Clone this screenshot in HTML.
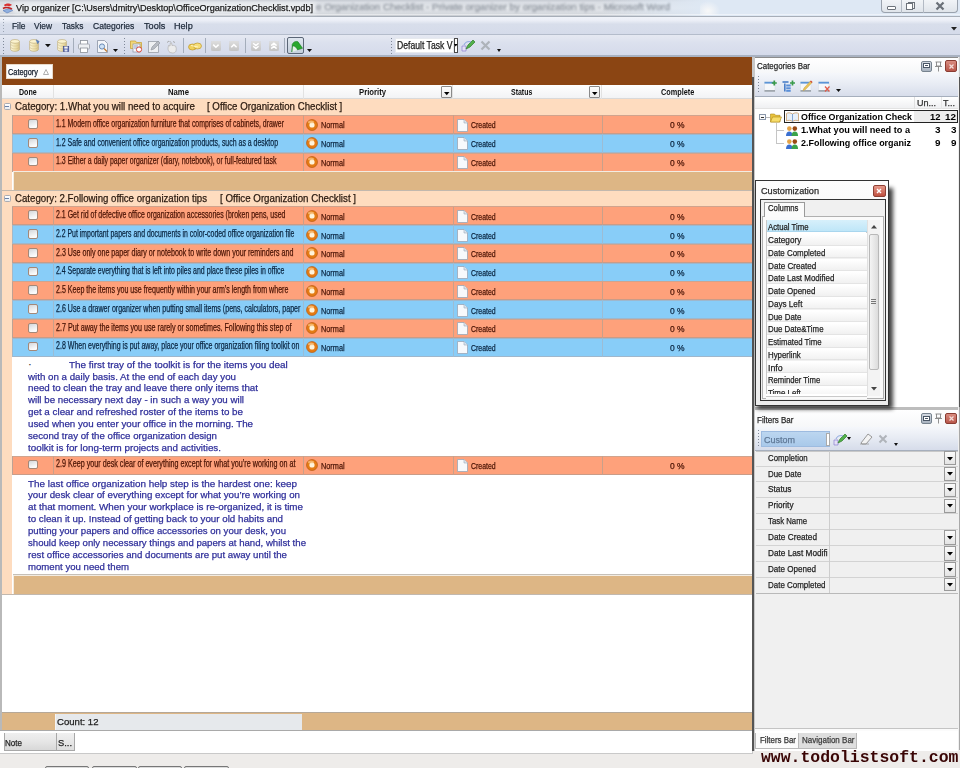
<!DOCTYPE html>
<html><head><meta charset="utf-8"><title>Vip organizer</title>
<style>
*{margin:0;padding:0;box-sizing:border-box}
html,body{width:960px;height:768px;overflow:hidden;background:#f0f0f0;font-family:"Liberation Sans",sans-serif;position:relative}
.a{position:absolute}
svg.a{overflow:visible}
.t{position:absolute;white-space:nowrap;transform-origin:0 0}
</style></head><body>
<div class="a" style="left:0px;top:0px;width:960px;height:16px;background:linear-gradient(#c6cbd2 0%,#d9dde3 15%,#e4e7eb 50%,#d5d9de 85%,#c9cdd3 100%)"></div>
<div class="a" style="left:600px;top:0px;width:360px;height:16px;background:linear-gradient(90deg,rgba(222,232,244,0) 0%,rgba(222,232,244,1) 30%,rgba(222,232,244,1) 100%)"></div>
<div class="a" style="left:700px;top:1px;width:260px;height:14px;background:radial-gradient(ellipse 12px 10px at 8px 10px,#f8f8f8,rgba(255,255,255,0))"></div>
<div class="a" style="left:0px;top:13.8px;width:960px;height:1px;background:rgba(255,255,255,.45)"></div>
<div class="a" style="left:0px;top:15.5px;width:960px;height:1px;background:#a7aeb8"></div>
<svg class="a" style="left:1.5px;top:2px" width="12" height="12" viewBox="0 0 12 12"><path d="M1 8.5l6-2 4 2-6 2.5z" fill="#8fb0e0" stroke="#4a6fb0" stroke-width=".5"/><path d="M2 3c2-2 6-2 8 0l-3 1.5C5.5 3.5 4 3.8 3 4.5z" fill="#d83030"/><path d="M1 6.5c2-1.5 6-1.5 9 .5" stroke="#c02020" stroke-width="1.6" fill="none"/></svg>
<div class="a" style="left:14px;top:2px;width:302px;height:12px;background:rgba(240,242,245,.7);filter:blur(2px)"></div>
<div class='t' style='left:16px;top:3.51px;line-height:9.2px;font-family:"Liberation Sans",sans-serif;font-size:9.2px;font-weight:normal;color:#1a1a1a;transform:scaleX(0.9920);-webkit-text-stroke:0.25px #1a1a1a;'>Vip organizer [C:\Users\dmitry\Desktop\OfficeOrganizationChecklist.vpdb]</div>
<div class='t' style='left:316px;top:3.18px;line-height:9px;font-family:"Liberation Sans",sans-serif;font-size:9px;font-weight:normal;color:#6f7782;transform:scaleX(1.0995);-webkit-text-stroke:0.25px #6f7782;filter:blur(1.2px);opacity:.75'>e Organization Checklist - Private organizer by organization tips - Microsoft Word</div>
<div class="a" style="left:880.5px;top:-1px;width:77px;height:14px;border:1px solid #9aa2ad;border-top:none;border-radius:0 0 4px 4px;background:linear-gradient(#f3f5f8,#dfe4ea)"></div>
<div class="a" style="left:901px;top:0px;width:1px;height:13px;background:#b3bac4"></div>
<div class="a" style="left:922.5px;top:0px;width:1px;height:13px;background:#b3bac4"></div>
<div class="a" style="left:887px;top:6px;width:9px;height:3.5px;border:1px solid #6d737b;border-radius:1px;background:#fff"></div>
<div class="a" style="left:908px;top:1.5px;width:7px;height:7px;border:1px solid #6d737b;background:#f4f4f4"></div>
<div class="a" style="left:906px;top:3px;width:7px;height:7px;border:1px solid #6d737b;background:#fff"></div>
<svg class="a" style="left:935px;top:1px" width="10" height="10" viewBox="0 0 10 10"><path d="M1.5 1.5L8.5 8.5M8.5 1.5L1.5 8.5" stroke="#6a7078" stroke-width="2.2"/></svg>
<div class="a" style="left:0px;top:16.5px;width:960px;height:18px;background:linear-gradient(#f1f4fa 0%,#eceff7 18%,#d8deeb 40%,#d5dbea 100%)"></div>
<div class="a" style="left:0px;top:34px;width:960px;height:1px;background:#b4bccb"></div>
<div class="a" style="left:3px;top:19px;width:1px;height:14px;background:repeating-linear-gradient(#9aa3b2 0 1px,transparent 1px 3px)"></div>
<div class='t' style='left:11.5px;top:21.37px;line-height:9.6px;font-family:"Liberation Sans",sans-serif;font-size:9.6px;font-weight:normal;color:#1e2a3a;transform:scaleX(0.8727);-webkit-text-stroke:0.25px #1e2a3a;'>File</div>
<div class='t' style='left:34px;top:21.37px;line-height:9.6px;font-family:"Liberation Sans",sans-serif;font-size:9.6px;font-weight:normal;color:#1e2a3a;transform:scaleX(0.8727);-webkit-text-stroke:0.25px #1e2a3a;'>View</div>
<div class='t' style='left:62px;top:21.37px;line-height:9.6px;font-family:"Liberation Sans",sans-serif;font-size:9.6px;font-weight:normal;color:#1e2a3a;transform:scaleX(0.8683);-webkit-text-stroke:0.25px #1e2a3a;'>Tasks</div>
<div class='t' style='left:92.7px;top:21.37px;line-height:9.6px;font-family:"Liberation Sans",sans-serif;font-size:9.6px;font-weight:normal;color:#1e2a3a;transform:scaleX(0.8900);-webkit-text-stroke:0.25px #1e2a3a;'>Categories</div>
<div class='t' style='left:143.7px;top:21.37px;line-height:9.6px;font-family:"Liberation Sans",sans-serif;font-size:9.6px;font-weight:normal;color:#1e2a3a;transform:scaleX(0.9506);-webkit-text-stroke:0.25px #1e2a3a;'>Tools</div>
<div class='t' style='left:174px;top:21.37px;line-height:9.6px;font-family:"Liberation Sans",sans-serif;font-size:9.6px;font-weight:normal;color:#1e2a3a;transform:scaleX(0.9476);-webkit-text-stroke:0.25px #1e2a3a;'>Help</div>
<svg class="a" style="left:951px;top:27px" width="6" height="4"><path d="M0 0H6L3 3.5Z" fill="#222"/></svg>
<div class="a" style="left:0px;top:35px;width:960px;height:21px;background:linear-gradient(#e6e9f2 0%,#dce1ee 35%,#d4daea 100%)"></div>
<div class="a" style="left:0px;top:55.3px;width:960px;height:1.5px;background:#a9b2c1"></div>
<div class="a" style="left:3px;top:38px;width:1.2px;height:16px;background:repeating-linear-gradient(#7f8898 0 .9px,transparent .9px 3px)"></div>
<div class="a" style="left:124px;top:38px;width:1.2px;height:16px;background:repeating-linear-gradient(#7f8898 0 .9px,transparent .9px 3px)"></div>
<div class="a" style="left:391px;top:38px;width:1.2px;height:16px;background:repeating-linear-gradient(#7f8898 0 .9px,transparent .9px 3px)"></div>
<div class="a" style="left:73px;top:38px;width:1.3px;height:15px;background:#a4adbb"></div>
<div class="a" style="left:183px;top:38px;width:1.3px;height:15px;background:#a4adbb"></div>
<div class="a" style="left:205px;top:38px;width:1.3px;height:15px;background:#a4adbb"></div>
<div class="a" style="left:244.6px;top:38px;width:1.3px;height:15px;background:#a4adbb"></div>
<div class="a" style="left:284px;top:38px;width:1.3px;height:15px;background:#a4adbb"></div>
<svg class="a" style="left:10.2px;top:38.9px" width="13" height="13" viewBox="0 0 13 13"><defs><linearGradient id="dbg" x1="0" x2="1"><stop offset="0" stop-color="#fbf6dc"/><stop offset=".55" stop-color="#efe2ae"/><stop offset="1" stop-color="#d8c488"/></linearGradient></defs><path d="M.6 2.4v8c0 1 2 1.9 4.4 1.9s4.4-.9 4.4-1.9v-8" fill="url(#dbg)" stroke="#b9a672" stroke-width=".6"/><ellipse cx="5" cy="2.4" rx="4.4" ry="1.9" fill="#fbf3cf" stroke="#b9a672" stroke-width=".6"/><path d="M.8 5.3c0 1 1.9 1.8 4.2 1.8s4.2-.8 4.2-1.8M.8 8.1c0 1 1.9 1.8 4.2 1.8s4.2-.8 4.2-1.8" fill="none" stroke="#cdbb85" stroke-width=".5"/></svg>
<svg class="a" style="left:29px;top:38.9px" width="13" height="13" viewBox="0 0 13 13"><defs><linearGradient id="dbg" x1="0" x2="1"><stop offset="0" stop-color="#fbf6dc"/><stop offset=".55" stop-color="#efe2ae"/><stop offset="1" stop-color="#d8c488"/></linearGradient></defs><path d="M.6 2.4v8c0 1 2 1.9 4.4 1.9s4.4-.9 4.4-1.9v-8" fill="url(#dbg)" stroke="#b9a672" stroke-width=".6"/><ellipse cx="5" cy="2.4" rx="4.4" ry="1.9" fill="#fbf3cf" stroke="#b9a672" stroke-width=".6"/><path d="M.8 5.3c0 1 1.9 1.8 4.2 1.8s4.2-.8 4.2-1.8M.8 8.1c0 1 1.9 1.8 4.2 1.8s4.2-.8 4.2-1.8" fill="none" stroke="#cdbb85" stroke-width=".5"/><path d="M7 .8l3.2 1.6-1.5 2.4z" fill="#5b84c8" stroke="#3a5f9e" stroke-width=".4"/></svg>
<svg class="a" style="left:57px;top:38.9px" width="13" height="13" viewBox="0 0 13 13"><defs><linearGradient id="dbg" x1="0" x2="1"><stop offset="0" stop-color="#fbf6dc"/><stop offset=".55" stop-color="#efe2ae"/><stop offset="1" stop-color="#d8c488"/></linearGradient></defs><path d="M.6 2.4v8c0 1 2 1.9 4.4 1.9s4.4-.9 4.4-1.9v-8" fill="url(#dbg)" stroke="#b9a672" stroke-width=".6"/><ellipse cx="5" cy="2.4" rx="4.4" ry="1.9" fill="#fbf3cf" stroke="#b9a672" stroke-width=".6"/><path d="M.8 5.3c0 1 1.9 1.8 4.2 1.8s4.2-.8 4.2-1.8M.8 8.1c0 1 1.9 1.8 4.2 1.8s4.2-.8 4.2-1.8" fill="none" stroke="#cdbb85" stroke-width=".5"/><rect x="6.2" y="7.3" width="5.6" height="5.4" fill="#5a68b0" stroke="#34407a" stroke-width=".5"/><rect x="7.3" y="7.6" width="3.4" height="2" fill="#f4f4f4"/><rect x="7.6" y="10.5" width="2.8" height="2" fill="#dfe3f0"/></svg>
<svg class="a" style="left:44.8px;top:44px" width="6" height="4"><path d="M0 0H5.8L2.9 3.3Z" fill="#111"/></svg>
<svg class="a" style="left:78px;top:39.5px" width="12" height="13" viewBox="0 0 12 13"><rect x="2.5" y="0.5" width="7" height="4" fill="#fff" stroke="#8a8f98" stroke-width=".8"/><rect x="0.5" y="4" width="11" height="5" rx="1" fill="#eef0f3" stroke="#9aa0a8" stroke-width=".8"/><rect x="2.5" y="8" width="7" height="4.5" fill="#fff" stroke="#8a8f98" stroke-width=".8"/></svg>
<svg class="a" style="left:96.5px;top:39.5px" width="11" height="13" viewBox="0 0 11 13"><path d="M.5 .5h7l3 3v9h-10z" fill="#f4f6fa" stroke="#8a93a3" stroke-width=".8"/><circle cx="5" cy="6.5" r="2.6" fill="#cfe2f5" stroke="#5c7fae" stroke-width=".9"/><path d="M7 8.5l3 3" stroke="#c07a30" stroke-width="1.3"/></svg>
<svg class="a" style="left:113px;top:49px" width="5" height="3"><path d="M0 0H5L2.5 3Z" fill="#111"/></svg>
<svg class="a" style="left:130px;top:39px" width="13" height="14" viewBox="0 0 13 14"><path d="M.5 2h5l1 1.5h5v6h-11z" fill="#f1d77a" stroke="#c59c2c" stroke-width=".7"/><rect x="3" y="5" width="7" height="8" fill="#f8f8fb" stroke="#8a93a3" stroke-width=".7"/><circle cx="9" cy="10.5" r="2.6" fill="#fff" stroke="#d9473c" stroke-width="1"/><path d="M4 7h4M4 9h3" stroke="#6f87b8" stroke-width=".8"/></svg>
<svg class="a" style="left:148px;top:39.5px" width="13" height="13" viewBox="0 0 13 13"><rect x=".5" y="1.5" width="10" height="11" fill="#eef0f3" stroke="#9aa0a8" stroke-width=".8"/><path d="M3 10l1-3 6-6 2 2-6 6z" fill="#b8bcc4" stroke="#8d939c" stroke-width=".6"/></svg>
<svg class="a" style="left:166px;top:39.5px" width="12" height="13" viewBox="0 0 12 13"><path d="M4 12.5c-1.5-1-2-2.5-2-4.5l.5-2.5 1.5.5.3-3 1.4.2.3 2.3 1.2-.2 1.3.4 1.2.5.6 2.3-.3 2.7c-.8 1.3-2 1.8-3.5 1.8z" fill="#ececec" stroke="#a8a8a8" stroke-width=".6"/><path d="M1 2.5l2-1.5M3.5 1l1.5 1.5M7 1.5l2 1" stroke="#9a9a9a" stroke-width=".8"/></svg>
<svg class="a" style="left:187.5px;top:40.5px" width="14" height="11" viewBox="0 0 14 11"><ellipse cx="4.5" cy="6" rx="4" ry="3" fill="#f1d25c" stroke="#b48c1c" stroke-width=".6"/><ellipse cx="9.5" cy="5" rx="4" ry="3" fill="#f6de7a" stroke="#b48c1c" stroke-width=".6"/><path d="M3 4.5l7 1.5" stroke="#fff4c0" stroke-width="1"/></svg>
<div class="a" style="left:211.2px;top:41px;width:9.8px;height:9.8px;border-radius:2px;background:linear-gradient(#dedede,#c3c3c3);box-shadow:0 0 0.6px #bbb"></div>
<svg class="a" style="left:211.2px;top:41px" width="10" height="10"><path d="M2.2 3.6l2.7 2.7 2.7-2.7" fill="none" stroke="#fff" stroke-width="1.5"/></svg>
<div class="a" style="left:229px;top:41px;width:9.8px;height:9.8px;border-radius:2px;background:linear-gradient(#dedede,#c3c3c3);box-shadow:0 0 0.6px #bbb"></div>
<svg class="a" style="left:229px;top:41px" width="10" height="10"><path d="M2.2 6.2l2.7-2.6 2.7 2.6" fill="none" stroke="#fff" stroke-width="1.5"/></svg>
<div class="a" style="left:251px;top:41px;width:9.8px;height:9.8px;border-radius:2px;background:linear-gradient(#dedede,#c3c3c3);box-shadow:0 0 0.6px #bbb"></div>
<svg class="a" style="left:251px;top:41px" width="10" height="10"><path d="M2.2 2.2l2.7 2.4 2.7-2.4M2.2 5.2l2.7 2.4 2.7-2.4" fill="none" stroke="#fff" stroke-width="1.5"/></svg>
<div class="a" style="left:269px;top:41px;width:9.8px;height:9.8px;border-radius:2px;background:linear-gradient(#dedede,#c3c3c3);box-shadow:0 0 0.6px #bbb"></div>
<svg class="a" style="left:269px;top:41px" width="10" height="10"><path d="M2.2 4.6l2.7-2.4 2.7 2.4M2.2 7.6l2.7-2.4 2.7 2.4" fill="none" stroke="#fff" stroke-width="1.5"/></svg>
<div class="a" style="left:286.7px;top:37.3px;width:17.5px;height:17px;border:1.2px solid #5b6677;border-radius:2px;background:linear-gradient(#dfe6ef,#c4cfdc)"></div>
<svg class="a" style="left:289px;top:39.5px" width="14" height="13" viewBox="0 0 14 13"><path d="M3 12L4 6C6 6 7.5 7.5 8.5 10z" fill="#e4f2e6"/><path d="M3.2 4.5C4.5 1.5 7 1 9 1.8L13.5 8.3L8.5 9.8C7 6.5 5 5.5 3.4 6.2z" fill="#2aa82e" stroke="#147a1c" stroke-width=".6"/><path d="M2.8 12L3.4 5.5" stroke="#2a8a30" stroke-width="1"/></svg>
<svg class="a" style="left:306.5px;top:49px" width="5" height="3"><path d="M0 0H5L2.5 3Z" fill="#111"/></svg>
<div class="a" style="left:394.6px;top:38px;width:59px;height:15.3px;background:#fff;border:1px solid #e6e9ee"></div>
<div class='t' style='left:397px;top:41.14px;line-height:10px;font-family:"Liberation Sans",sans-serif;font-size:10px;font-weight:normal;color:#1a1a1a;transform:scaleX(0.8632);-webkit-text-stroke:0.25px #1a1a1a;'>Default Task V</div>
<div class="a" style="left:453.5px;top:38px;width:4.5px;height:15.3px;background:#fff;border:1px solid #4b4b4b"></div>
<svg class="a" style="left:454.3px;top:44px" width="3.5" height="3"><path d="M0 0H3.5L1.75 2.5Z" fill="#000"/></svg>
<svg class="a" style="left:461px;top:39px" width="14" height="13" viewBox="0 0 14 13"><path d="M1 7h4v5H1z" fill="#e4e0f6" stroke="#8a7fd0" stroke-width=".7"/><path d="M5 10l2-4 5-5 2 2-5 5z" fill="#52b04a" stroke="#2f7d2a" stroke-width=".7"/><path d="M3 6c1-3 4-4 7-3" fill="none" stroke="#6d8fd8" stroke-width=".8"/></svg>
<svg class="a" style="left:480px;top:40px" width="11" height="11"><path d="M1.5 1.5L9.5 9.5M9.5 1.5L1.5 9.5" stroke="#aeb3ba" stroke-width="2.2"/></svg>
<svg class="a" style="left:497px;top:48.5px" width="4" height="3"><path d="M0 0H4L2 3Z" fill="#111"/></svg>
<div class="a" style="left:0px;top:57px;width:752.5px;height:654.5px;background:#fff"></div>
<div class="a" style="left:0px;top:57px;width:1.7px;height:654.5px;background:#b9b9b9"></div>
<div class="a" style="left:1.7px;top:57px;width:750.8px;height:27.6px;background:#8b4513"></div>
<div class="a" style="left:6px;top:64px;width:47px;height:15px;background:#fdfdfd;border:1px solid #e8d9c8"></div>
<div class='t' style='left:7.5px;top:67.95px;line-height:8.8px;font-family:"Liberation Sans",sans-serif;font-size:8.8px;font-weight:normal;color:#111a2a;transform:scaleX(0.8403);-webkit-text-stroke:0.25px #111a2a;'>Category</div>
<svg class="a" style="left:43px;top:68.5px" width="6" height="6"><path d="M3 .5L5.5 5.5H.5Z" fill="none" stroke="#9a9a9a" stroke-width=".8"/></svg>
<div class="a" style="left:1.7px;top:84.6px;width:750.8px;height:14.2px;background:linear-gradient(#fefefe,#f2f3f5);border-bottom:1px solid #d9d9d9"></div>
<div class="a" style="left:53.3px;top:84.8px;width:1px;height:14px;background:#e2e2e2"></div>
<div class="a" style="left:303px;top:84.8px;width:1px;height:14px;background:#e2e2e2"></div>
<div class="a" style="left:452px;top:84.8px;width:1px;height:14px;background:#e2e2e2"></div>
<div class="a" style="left:601px;top:84.8px;width:1px;height:14px;background:#e2e2e2"></div>
<div class='t' style='left:19px;top:88.49px;line-height:8.4px;font-family:"Liberation Sans",sans-serif;font-size:8.4px;font-weight:bold;color:#111;transform:scaleX(0.8454);'>Done</div>
<div class='t' style='left:168px;top:88.49px;line-height:8.4px;font-family:"Liberation Sans",sans-serif;font-size:8.4px;font-weight:bold;color:#111;transform:scaleX(0.9205);'>Name</div>
<div class='t' style='left:359px;top:88.49px;line-height:8.4px;font-family:"Liberation Sans",sans-serif;font-size:8.4px;font-weight:bold;color:#111;transform:scaleX(0.9206);'>Priority</div>
<div class='t' style='left:510.7px;top:88.49px;line-height:8.4px;font-family:"Liberation Sans",sans-serif;font-size:8.4px;font-weight:bold;color:#111;transform:scaleX(0.8317);'>Status</div>
<div class='t' style='left:660.7px;top:88.49px;line-height:8.4px;font-family:"Liberation Sans",sans-serif;font-size:8.4px;font-weight:bold;color:#111;transform:scaleX(0.8724);'>Complete</div>
<div class="a" style="left:440.8px;top:86.2px;width:11.1px;height:11.9px;background:linear-gradient(#fdfdfd,#ececec);border:1px solid #8a8a8a;border-bottom:1.5px solid #8a8a8a;border-radius:1px"></div>
<svg class="a" style="left:443.7px;top:92px" width="5.5" height="3.4"><path d="M0 0H5.5L2.75 3.3Z" fill="#000"/></svg>
<div class="a" style="left:589.2px;top:86.2px;width:11.1px;height:11.9px;background:linear-gradient(#fdfdfd,#ececec);border:1px solid #8a8a8a;border-bottom:1.5px solid #8a8a8a;border-radius:1px"></div>
<svg class="a" style="left:592.1px;top:92px" width="5.5" height="3.4"><path d="M0 0H5.5L2.75 3.3Z" fill="#000"/></svg>
<div class="a" style="left:1.7px;top:98.8px;width:750.8px;height:16.5px;background:#fedcbf"></div>
<div class="a" style="left:3.7px;top:102.85px;width:7.1px;height:7px;border:1px solid #a8acb4;background:linear-gradient(#fff,#e9ecf0);border-radius:1.5px"></div>
<div class="a" style="left:5.3px;top:105.95px;width:3.9px;height:1px;background:#6a82a8"></div>
<div class='t' style='left:15px;top:102.08px;line-height:10.3px;font-family:"Liberation Sans",sans-serif;font-size:10.3px;font-weight:normal;color:#2a1a10;transform:scaleX(0.9444);-webkit-text-stroke:0.25px #2a1a10;'>Category: 1.What you will need to acquire</div>
<div class='t' style='left:207.3px;top:102.08px;line-height:10.3px;font-family:"Liberation Sans",sans-serif;font-size:10.3px;font-weight:normal;color:#2a1a10;transform:scaleX(0.9394);-webkit-text-stroke:0.25px #2a1a10;'>[ Office Organization Checklist ]</div>
<div class="a" style="left:1.7px;top:115.3px;width:11.5px;height:18.75px;background:#fedcbf"></div>
<div class="a" style="left:12px;top:115.0px;width:740.5px;height:19.35px;background:#fea17b"></div>
<div class="a" style="left:12px;top:133.15px;width:740.5px;height:1.1px;background:#c99c88"></div>
<div class="a" style="left:12px;top:115.0px;width:740.5px;height:0.9px;background:#d0a48e"></div>
<div class="a" style="left:12px;top:115.3px;width:1px;height:18.75px;background:#bda294"></div>
<div class="a" style="left:53.3px;top:115.3px;width:0.9px;height:18.75px;background:#c9a08a"></div>
<div class="a" style="left:303px;top:115.3px;width:0.9px;height:18.75px;background:#c9a08a"></div>
<div class="a" style="left:453.3px;top:115.3px;width:0.9px;height:18.75px;background:#c9a08a"></div>
<div class="a" style="left:601.5px;top:115.3px;width:0.9px;height:18.75px;background:#c9a08a"></div>
<div class="a" style="left:27.6px;top:119.1px;width:10px;height:9.8px;border:1px solid #a48878;border-radius:2px;background:linear-gradient(160deg,#d2d6da 0%,#e8eaec 40%,#fbfbfb 80%)"></div>
<div class='t' style='left:55.6px;top:118.93px;line-height:10px;font-family:"Liberation Sans",sans-serif;font-size:10px;font-weight:normal;color:#4a1405;transform:scaleX(0.6932);-webkit-text-stroke:0.25px #4a1405;'>1.1 Modern office organization furniture that comprises of cabinets, drawer</div>
<svg class="a" style="left:305.6px;top:118.6px" width="12" height="12" viewBox="0 0 12 12"><circle cx="6" cy="6" r="5.5" fill="#e47b14"/><circle cx="6" cy="6" r="5.5" fill="none" stroke="#b3530a" stroke-width=".6"/><circle cx="6" cy="6" r="2.6" fill="#fff4dc"/><ellipse cx="5" cy="3" rx="3" ry="1.6" fill="#ffd9a0" opacity=".6"/></svg>
<div class='t' style='left:321px;top:120.46px;line-height:9.5px;font-family:"Liberation Sans",sans-serif;font-size:9.5px;font-weight:normal;color:#4a1405;transform:scaleX(0.7706);-webkit-text-stroke:0.25px #4a1405;'>Normal</div>
<svg class="a" style="left:457.2px;top:118.6px" width="11" height="13" viewBox="0 0 11 13"><path d="M.5 .5h6.5l3.5 3.5v8.5h-10z" fill="#f7f9fc" stroke="#9aa7b8" stroke-width=".8"/><path d="M7 .5v3.5h3.5" fill="#dde5ee" stroke="#9aa7b8" stroke-width=".6"/></svg>
<div class='t' style='left:471.3px;top:120.46px;line-height:9.5px;font-family:"Liberation Sans",sans-serif;font-size:9.5px;font-weight:normal;color:#4a1405;transform:scaleX(0.7275);-webkit-text-stroke:0.25px #4a1405;'>Created</div>
<div class='t' style='left:670px;top:120.46px;line-height:9.5px;font-family:"Liberation Sans",sans-serif;font-size:9.5px;font-weight:normal;color:#4a1405;transform:scaleX(0.8916);-webkit-text-stroke:0.25px #4a1405;'>0 %</div>
<div class="a" style="left:1.7px;top:134.05px;width:11.5px;height:18.75px;background:#fedcbf"></div>
<div class="a" style="left:12px;top:133.75px;width:740.5px;height:19.35px;background:#88cdf8"></div>
<div class="a" style="left:12px;top:151.9px;width:740.5px;height:1.1px;background:#9fb7cc"></div>
<div class="a" style="left:12px;top:133.75px;width:740.5px;height:0.9px;background:#9fb7cc"></div>
<div class="a" style="left:12px;top:134.05px;width:1px;height:18.75px;background:#a4b8c8"></div>
<div class="a" style="left:53.3px;top:134.05px;width:0.9px;height:18.75px;background:#9cbcd4"></div>
<div class="a" style="left:303px;top:134.05px;width:0.9px;height:18.75px;background:#9cbcd4"></div>
<div class="a" style="left:453.3px;top:134.05px;width:0.9px;height:18.75px;background:#9cbcd4"></div>
<div class="a" style="left:601.5px;top:134.05px;width:0.9px;height:18.75px;background:#9cbcd4"></div>
<div class="a" style="left:27.6px;top:137.85000000000002px;width:10px;height:9.8px;border:1px solid #a48878;border-radius:2px;background:linear-gradient(160deg,#d2d6da 0%,#e8eaec 40%,#fbfbfb 80%)"></div>
<div class='t' style='left:55.6px;top:137.69px;line-height:10px;font-family:"Liberation Sans",sans-serif;font-size:10px;font-weight:normal;color:#0a2540;transform:scaleX(0.6961);-webkit-text-stroke:0.25px #0a2540;'>1.2 Safe and convenient office organization products, such as a desktop</div>
<svg class="a" style="left:305.6px;top:137.35000000000002px" width="12" height="12" viewBox="0 0 12 12"><circle cx="6" cy="6" r="5.5" fill="#e47b14"/><circle cx="6" cy="6" r="5.5" fill="none" stroke="#b3530a" stroke-width=".6"/><circle cx="6" cy="6" r="2.6" fill="#fff4dc"/><ellipse cx="5" cy="3" rx="3" ry="1.6" fill="#ffd9a0" opacity=".6"/></svg>
<div class='t' style='left:321px;top:139.21px;line-height:9.5px;font-family:"Liberation Sans",sans-serif;font-size:9.5px;font-weight:normal;color:#0a2540;transform:scaleX(0.7706);-webkit-text-stroke:0.25px #0a2540;'>Normal</div>
<svg class="a" style="left:457.2px;top:137.35000000000002px" width="11" height="13" viewBox="0 0 11 13"><path d="M.5 .5h6.5l3.5 3.5v8.5h-10z" fill="#f7f9fc" stroke="#9aa7b8" stroke-width=".8"/><path d="M7 .5v3.5h3.5" fill="#dde5ee" stroke="#9aa7b8" stroke-width=".6"/></svg>
<div class='t' style='left:471.3px;top:139.21px;line-height:9.5px;font-family:"Liberation Sans",sans-serif;font-size:9.5px;font-weight:normal;color:#0a2540;transform:scaleX(0.7275);-webkit-text-stroke:0.25px #0a2540;'>Created</div>
<div class='t' style='left:670px;top:139.21px;line-height:9.5px;font-family:"Liberation Sans",sans-serif;font-size:9.5px;font-weight:normal;color:#0a2540;transform:scaleX(0.8916);-webkit-text-stroke:0.25px #0a2540;'>0 %</div>
<div class="a" style="left:1.7px;top:152.8px;width:11.5px;height:18.75px;background:#fedcbf"></div>
<div class="a" style="left:12px;top:152.5px;width:740.5px;height:19.35px;background:#fea17b"></div>
<div class="a" style="left:12px;top:170.65px;width:740.5px;height:1.1px;background:#c99c88"></div>
<div class="a" style="left:12px;top:152.5px;width:740.5px;height:0.9px;background:#d0a48e"></div>
<div class="a" style="left:12px;top:152.8px;width:1px;height:18.75px;background:#bda294"></div>
<div class="a" style="left:53.3px;top:152.8px;width:0.9px;height:18.75px;background:#c9a08a"></div>
<div class="a" style="left:303px;top:152.8px;width:0.9px;height:18.75px;background:#c9a08a"></div>
<div class="a" style="left:453.3px;top:152.8px;width:0.9px;height:18.75px;background:#c9a08a"></div>
<div class="a" style="left:601.5px;top:152.8px;width:0.9px;height:18.75px;background:#c9a08a"></div>
<div class="a" style="left:27.6px;top:156.60000000000002px;width:10px;height:9.8px;border:1px solid #a48878;border-radius:2px;background:linear-gradient(160deg,#d2d6da 0%,#e8eaec 40%,#fbfbfb 80%)"></div>
<div class='t' style='left:55.6px;top:156.44px;line-height:10px;font-family:"Liberation Sans",sans-serif;font-size:10px;font-weight:normal;color:#4a1405;transform:scaleX(0.6985);-webkit-text-stroke:0.25px #4a1405;'>1.3 Either a daily paper organizer (diary, notebook), or full-featured task</div>
<svg class="a" style="left:305.6px;top:156.10000000000002px" width="12" height="12" viewBox="0 0 12 12"><circle cx="6" cy="6" r="5.5" fill="#e47b14"/><circle cx="6" cy="6" r="5.5" fill="none" stroke="#b3530a" stroke-width=".6"/><circle cx="6" cy="6" r="2.6" fill="#fff4dc"/><ellipse cx="5" cy="3" rx="3" ry="1.6" fill="#ffd9a0" opacity=".6"/></svg>
<div class='t' style='left:321px;top:157.96px;line-height:9.5px;font-family:"Liberation Sans",sans-serif;font-size:9.5px;font-weight:normal;color:#4a1405;transform:scaleX(0.7706);-webkit-text-stroke:0.25px #4a1405;'>Normal</div>
<svg class="a" style="left:457.2px;top:156.10000000000002px" width="11" height="13" viewBox="0 0 11 13"><path d="M.5 .5h6.5l3.5 3.5v8.5h-10z" fill="#f7f9fc" stroke="#9aa7b8" stroke-width=".8"/><path d="M7 .5v3.5h3.5" fill="#dde5ee" stroke="#9aa7b8" stroke-width=".6"/></svg>
<div class='t' style='left:471.3px;top:157.96px;line-height:9.5px;font-family:"Liberation Sans",sans-serif;font-size:9.5px;font-weight:normal;color:#4a1405;transform:scaleX(0.7275);-webkit-text-stroke:0.25px #4a1405;'>Created</div>
<div class='t' style='left:670px;top:157.96px;line-height:9.5px;font-family:"Liberation Sans",sans-serif;font-size:9.5px;font-weight:normal;color:#4a1405;transform:scaleX(0.8916);-webkit-text-stroke:0.25px #4a1405;'>0 %</div>
<div class="a" style="left:1.7px;top:171.3px;width:10.8px;height:19.299999999999983px;background:#fedcbf"></div>
<div class="a" style="left:12.5px;top:171.3px;width:740.0px;height:19.299999999999983px;background:#ddb685"></div>
<div class="a" style="left:12.5px;top:171.3px;width:740.0px;height:1.2px;background:#f3ece2"></div>
<div class="a" style="left:12.5px;top:171.3px;width:1.5px;height:19.299999999999983px;background:#f3ece2"></div>
<div class="a" style="left:1.7px;top:190.1px;width:750.8px;height:1px;background:#c2b8ae"></div>
<div class="a" style="left:1.7px;top:190.9px;width:750.8px;height:15.699999999999989px;background:#fedcbf"></div>
<div class="a" style="left:3.7px;top:194.55px;width:7.1px;height:7px;border:1px solid #a8acb4;background:linear-gradient(#fff,#e9ecf0);border-radius:1.5px"></div>
<div class="a" style="left:5.3px;top:197.65px;width:3.9px;height:1px;background:#6a82a8"></div>
<div class='t' style='left:15px;top:194.18px;line-height:10.3px;font-family:"Liberation Sans",sans-serif;font-size:10.3px;font-weight:normal;color:#2a1a10;transform:scaleX(0.9379);-webkit-text-stroke:0.25px #2a1a10;'>Category: 2.Following office organization tips</div>
<div class='t' style='left:220px;top:194.18px;line-height:10.3px;font-family:"Liberation Sans",sans-serif;font-size:10.3px;font-weight:normal;color:#2a1a10;transform:scaleX(0.9442);-webkit-text-stroke:0.25px #2a1a10;'>[ Office Organization Checklist ]</div>
<div class="a" style="left:1.7px;top:206.6px;width:11.5px;height:18.75px;background:#fedcbf"></div>
<div class="a" style="left:12px;top:206.29999999999998px;width:740.5px;height:19.35px;background:#fea17b"></div>
<div class="a" style="left:12px;top:224.45px;width:740.5px;height:1.1px;background:#c99c88"></div>
<div class="a" style="left:12px;top:206.29999999999998px;width:740.5px;height:0.9px;background:#d0a48e"></div>
<div class="a" style="left:12px;top:206.6px;width:1px;height:18.75px;background:#bda294"></div>
<div class="a" style="left:53.3px;top:206.6px;width:0.9px;height:18.75px;background:#c9a08a"></div>
<div class="a" style="left:303px;top:206.6px;width:0.9px;height:18.75px;background:#c9a08a"></div>
<div class="a" style="left:453.3px;top:206.6px;width:0.9px;height:18.75px;background:#c9a08a"></div>
<div class="a" style="left:601.5px;top:206.6px;width:0.9px;height:18.75px;background:#c9a08a"></div>
<div class="a" style="left:27.6px;top:210.4px;width:10px;height:9.8px;border:1px solid #a48878;border-radius:2px;background:linear-gradient(160deg,#d2d6da 0%,#e8eaec 40%,#fbfbfb 80%)"></div>
<div class='t' style='left:55.6px;top:210.23px;line-height:10px;font-family:"Liberation Sans",sans-serif;font-size:10px;font-weight:normal;color:#4a1405;transform:scaleX(0.6987);-webkit-text-stroke:0.25px #4a1405;'>2.1 Get rid of defective office organization accessories (broken pens, used</div>
<svg class="a" style="left:305.6px;top:209.9px" width="12" height="12" viewBox="0 0 12 12"><circle cx="6" cy="6" r="5.5" fill="#e47b14"/><circle cx="6" cy="6" r="5.5" fill="none" stroke="#b3530a" stroke-width=".6"/><circle cx="6" cy="6" r="2.6" fill="#fff4dc"/><ellipse cx="5" cy="3" rx="3" ry="1.6" fill="#ffd9a0" opacity=".6"/></svg>
<div class='t' style='left:321px;top:211.76px;line-height:9.5px;font-family:"Liberation Sans",sans-serif;font-size:9.5px;font-weight:normal;color:#4a1405;transform:scaleX(0.7706);-webkit-text-stroke:0.25px #4a1405;'>Normal</div>
<svg class="a" style="left:457.2px;top:209.9px" width="11" height="13" viewBox="0 0 11 13"><path d="M.5 .5h6.5l3.5 3.5v8.5h-10z" fill="#f7f9fc" stroke="#9aa7b8" stroke-width=".8"/><path d="M7 .5v3.5h3.5" fill="#dde5ee" stroke="#9aa7b8" stroke-width=".6"/></svg>
<div class='t' style='left:471.3px;top:211.76px;line-height:9.5px;font-family:"Liberation Sans",sans-serif;font-size:9.5px;font-weight:normal;color:#4a1405;transform:scaleX(0.7275);-webkit-text-stroke:0.25px #4a1405;'>Created</div>
<div class='t' style='left:670px;top:211.76px;line-height:9.5px;font-family:"Liberation Sans",sans-serif;font-size:9.5px;font-weight:normal;color:#4a1405;transform:scaleX(0.8916);-webkit-text-stroke:0.25px #4a1405;'>0 %</div>
<div class="a" style="left:1.7px;top:225.35px;width:11.5px;height:18.75px;background:#fedcbf"></div>
<div class="a" style="left:12px;top:225.04999999999998px;width:740.5px;height:19.35px;background:#88cdf8"></div>
<div class="a" style="left:12px;top:243.2px;width:740.5px;height:1.1px;background:#9fb7cc"></div>
<div class="a" style="left:12px;top:225.04999999999998px;width:740.5px;height:0.9px;background:#9fb7cc"></div>
<div class="a" style="left:12px;top:225.35px;width:1px;height:18.75px;background:#a4b8c8"></div>
<div class="a" style="left:53.3px;top:225.35px;width:0.9px;height:18.75px;background:#9cbcd4"></div>
<div class="a" style="left:303px;top:225.35px;width:0.9px;height:18.75px;background:#9cbcd4"></div>
<div class="a" style="left:453.3px;top:225.35px;width:0.9px;height:18.75px;background:#9cbcd4"></div>
<div class="a" style="left:601.5px;top:225.35px;width:0.9px;height:18.75px;background:#9cbcd4"></div>
<div class="a" style="left:27.6px;top:229.15px;width:10px;height:9.8px;border:1px solid #a48878;border-radius:2px;background:linear-gradient(160deg,#d2d6da 0%,#e8eaec 40%,#fbfbfb 80%)"></div>
<div class='t' style='left:55.6px;top:228.98px;line-height:10px;font-family:"Liberation Sans",sans-serif;font-size:10px;font-weight:normal;color:#0a2540;transform:scaleX(0.6899);-webkit-text-stroke:0.25px #0a2540;'>2.2 Put important papers and documents in color-coded office organization file</div>
<svg class="a" style="left:305.6px;top:228.65px" width="12" height="12" viewBox="0 0 12 12"><circle cx="6" cy="6" r="5.5" fill="#e47b14"/><circle cx="6" cy="6" r="5.5" fill="none" stroke="#b3530a" stroke-width=".6"/><circle cx="6" cy="6" r="2.6" fill="#fff4dc"/><ellipse cx="5" cy="3" rx="3" ry="1.6" fill="#ffd9a0" opacity=".6"/></svg>
<div class='t' style='left:321px;top:230.51px;line-height:9.5px;font-family:"Liberation Sans",sans-serif;font-size:9.5px;font-weight:normal;color:#0a2540;transform:scaleX(0.7706);-webkit-text-stroke:0.25px #0a2540;'>Normal</div>
<svg class="a" style="left:457.2px;top:228.65px" width="11" height="13" viewBox="0 0 11 13"><path d="M.5 .5h6.5l3.5 3.5v8.5h-10z" fill="#f7f9fc" stroke="#9aa7b8" stroke-width=".8"/><path d="M7 .5v3.5h3.5" fill="#dde5ee" stroke="#9aa7b8" stroke-width=".6"/></svg>
<div class='t' style='left:471.3px;top:230.51px;line-height:9.5px;font-family:"Liberation Sans",sans-serif;font-size:9.5px;font-weight:normal;color:#0a2540;transform:scaleX(0.7275);-webkit-text-stroke:0.25px #0a2540;'>Created</div>
<div class='t' style='left:670px;top:230.51px;line-height:9.5px;font-family:"Liberation Sans",sans-serif;font-size:9.5px;font-weight:normal;color:#0a2540;transform:scaleX(0.8916);-webkit-text-stroke:0.25px #0a2540;'>0 %</div>
<div class="a" style="left:1.7px;top:244.1px;width:11.5px;height:18.75px;background:#fedcbf"></div>
<div class="a" style="left:12px;top:243.79999999999998px;width:740.5px;height:19.35px;background:#fea17b"></div>
<div class="a" style="left:12px;top:261.95px;width:740.5px;height:1.1px;background:#c99c88"></div>
<div class="a" style="left:12px;top:243.79999999999998px;width:740.5px;height:0.9px;background:#d0a48e"></div>
<div class="a" style="left:12px;top:244.1px;width:1px;height:18.75px;background:#bda294"></div>
<div class="a" style="left:53.3px;top:244.1px;width:0.9px;height:18.75px;background:#c9a08a"></div>
<div class="a" style="left:303px;top:244.1px;width:0.9px;height:18.75px;background:#c9a08a"></div>
<div class="a" style="left:453.3px;top:244.1px;width:0.9px;height:18.75px;background:#c9a08a"></div>
<div class="a" style="left:601.5px;top:244.1px;width:0.9px;height:18.75px;background:#c9a08a"></div>
<div class="a" style="left:27.6px;top:247.9px;width:10px;height:9.8px;border:1px solid #a48878;border-radius:2px;background:linear-gradient(160deg,#d2d6da 0%,#e8eaec 40%,#fbfbfb 80%)"></div>
<div class='t' style='left:55.6px;top:247.73px;line-height:10px;font-family:"Liberation Sans",sans-serif;font-size:10px;font-weight:normal;color:#4a1405;transform:scaleX(0.7106);-webkit-text-stroke:0.25px #4a1405;'>2.3 Use only one paper diary or notebook to write down your reminders and</div>
<svg class="a" style="left:305.6px;top:247.4px" width="12" height="12" viewBox="0 0 12 12"><circle cx="6" cy="6" r="5.5" fill="#e47b14"/><circle cx="6" cy="6" r="5.5" fill="none" stroke="#b3530a" stroke-width=".6"/><circle cx="6" cy="6" r="2.6" fill="#fff4dc"/><ellipse cx="5" cy="3" rx="3" ry="1.6" fill="#ffd9a0" opacity=".6"/></svg>
<div class='t' style='left:321px;top:249.26px;line-height:9.5px;font-family:"Liberation Sans",sans-serif;font-size:9.5px;font-weight:normal;color:#4a1405;transform:scaleX(0.7706);-webkit-text-stroke:0.25px #4a1405;'>Normal</div>
<svg class="a" style="left:457.2px;top:247.4px" width="11" height="13" viewBox="0 0 11 13"><path d="M.5 .5h6.5l3.5 3.5v8.5h-10z" fill="#f7f9fc" stroke="#9aa7b8" stroke-width=".8"/><path d="M7 .5v3.5h3.5" fill="#dde5ee" stroke="#9aa7b8" stroke-width=".6"/></svg>
<div class='t' style='left:471.3px;top:249.26px;line-height:9.5px;font-family:"Liberation Sans",sans-serif;font-size:9.5px;font-weight:normal;color:#4a1405;transform:scaleX(0.7275);-webkit-text-stroke:0.25px #4a1405;'>Created</div>
<div class='t' style='left:670px;top:249.26px;line-height:9.5px;font-family:"Liberation Sans",sans-serif;font-size:9.5px;font-weight:normal;color:#4a1405;transform:scaleX(0.8916);-webkit-text-stroke:0.25px #4a1405;'>0 %</div>
<div class="a" style="left:1.7px;top:262.85px;width:11.5px;height:18.75px;background:#fedcbf"></div>
<div class="a" style="left:12px;top:262.55px;width:740.5px;height:19.35px;background:#88cdf8"></div>
<div class="a" style="left:12px;top:280.70000000000005px;width:740.5px;height:1.1px;background:#9fb7cc"></div>
<div class="a" style="left:12px;top:262.55px;width:740.5px;height:0.9px;background:#9fb7cc"></div>
<div class="a" style="left:12px;top:262.85px;width:1px;height:18.75px;background:#a4b8c8"></div>
<div class="a" style="left:53.3px;top:262.85px;width:0.9px;height:18.75px;background:#9cbcd4"></div>
<div class="a" style="left:303px;top:262.85px;width:0.9px;height:18.75px;background:#9cbcd4"></div>
<div class="a" style="left:453.3px;top:262.85px;width:0.9px;height:18.75px;background:#9cbcd4"></div>
<div class="a" style="left:601.5px;top:262.85px;width:0.9px;height:18.75px;background:#9cbcd4"></div>
<div class="a" style="left:27.6px;top:266.65000000000003px;width:10px;height:9.8px;border:1px solid #a48878;border-radius:2px;background:linear-gradient(160deg,#d2d6da 0%,#e8eaec 40%,#fbfbfb 80%)"></div>
<div class='t' style='left:55.6px;top:266.49px;line-height:10px;font-family:"Liberation Sans",sans-serif;font-size:10px;font-weight:normal;color:#0a2540;transform:scaleX(0.6967);-webkit-text-stroke:0.25px #0a2540;'>2.4 Separate everything that is left into piles and place these piles in office</div>
<svg class="a" style="left:305.6px;top:266.15000000000003px" width="12" height="12" viewBox="0 0 12 12"><circle cx="6" cy="6" r="5.5" fill="#e47b14"/><circle cx="6" cy="6" r="5.5" fill="none" stroke="#b3530a" stroke-width=".6"/><circle cx="6" cy="6" r="2.6" fill="#fff4dc"/><ellipse cx="5" cy="3" rx="3" ry="1.6" fill="#ffd9a0" opacity=".6"/></svg>
<div class='t' style='left:321px;top:268.01px;line-height:9.5px;font-family:"Liberation Sans",sans-serif;font-size:9.5px;font-weight:normal;color:#0a2540;transform:scaleX(0.7706);-webkit-text-stroke:0.25px #0a2540;'>Normal</div>
<svg class="a" style="left:457.2px;top:266.15000000000003px" width="11" height="13" viewBox="0 0 11 13"><path d="M.5 .5h6.5l3.5 3.5v8.5h-10z" fill="#f7f9fc" stroke="#9aa7b8" stroke-width=".8"/><path d="M7 .5v3.5h3.5" fill="#dde5ee" stroke="#9aa7b8" stroke-width=".6"/></svg>
<div class='t' style='left:471.3px;top:268.01px;line-height:9.5px;font-family:"Liberation Sans",sans-serif;font-size:9.5px;font-weight:normal;color:#0a2540;transform:scaleX(0.7275);-webkit-text-stroke:0.25px #0a2540;'>Created</div>
<div class='t' style='left:670px;top:268.01px;line-height:9.5px;font-family:"Liberation Sans",sans-serif;font-size:9.5px;font-weight:normal;color:#0a2540;transform:scaleX(0.8916);-webkit-text-stroke:0.25px #0a2540;'>0 %</div>
<div class="a" style="left:1.7px;top:281.6px;width:11.5px;height:18.75px;background:#fedcbf"></div>
<div class="a" style="left:12px;top:281.3px;width:740.5px;height:19.35px;background:#fea17b"></div>
<div class="a" style="left:12px;top:299.45000000000005px;width:740.5px;height:1.1px;background:#c99c88"></div>
<div class="a" style="left:12px;top:281.3px;width:740.5px;height:0.9px;background:#d0a48e"></div>
<div class="a" style="left:12px;top:281.6px;width:1px;height:18.75px;background:#bda294"></div>
<div class="a" style="left:53.3px;top:281.6px;width:0.9px;height:18.75px;background:#c9a08a"></div>
<div class="a" style="left:303px;top:281.6px;width:0.9px;height:18.75px;background:#c9a08a"></div>
<div class="a" style="left:453.3px;top:281.6px;width:0.9px;height:18.75px;background:#c9a08a"></div>
<div class="a" style="left:601.5px;top:281.6px;width:0.9px;height:18.75px;background:#c9a08a"></div>
<div class="a" style="left:27.6px;top:285.40000000000003px;width:10px;height:9.8px;border:1px solid #a48878;border-radius:2px;background:linear-gradient(160deg,#d2d6da 0%,#e8eaec 40%,#fbfbfb 80%)"></div>
<div class='t' style='left:55.6px;top:285.24px;line-height:10px;font-family:"Liberation Sans",sans-serif;font-size:10px;font-weight:normal;color:#4a1405;transform:scaleX(0.7078);-webkit-text-stroke:0.25px #4a1405;'>2.5 Keep the items you use frequently within your arm’s length from where</div>
<svg class="a" style="left:305.6px;top:284.90000000000003px" width="12" height="12" viewBox="0 0 12 12"><circle cx="6" cy="6" r="5.5" fill="#e47b14"/><circle cx="6" cy="6" r="5.5" fill="none" stroke="#b3530a" stroke-width=".6"/><circle cx="6" cy="6" r="2.6" fill="#fff4dc"/><ellipse cx="5" cy="3" rx="3" ry="1.6" fill="#ffd9a0" opacity=".6"/></svg>
<div class='t' style='left:321px;top:286.76px;line-height:9.5px;font-family:"Liberation Sans",sans-serif;font-size:9.5px;font-weight:normal;color:#4a1405;transform:scaleX(0.7706);-webkit-text-stroke:0.25px #4a1405;'>Normal</div>
<svg class="a" style="left:457.2px;top:284.90000000000003px" width="11" height="13" viewBox="0 0 11 13"><path d="M.5 .5h6.5l3.5 3.5v8.5h-10z" fill="#f7f9fc" stroke="#9aa7b8" stroke-width=".8"/><path d="M7 .5v3.5h3.5" fill="#dde5ee" stroke="#9aa7b8" stroke-width=".6"/></svg>
<div class='t' style='left:471.3px;top:286.76px;line-height:9.5px;font-family:"Liberation Sans",sans-serif;font-size:9.5px;font-weight:normal;color:#4a1405;transform:scaleX(0.7275);-webkit-text-stroke:0.25px #4a1405;'>Created</div>
<div class='t' style='left:670px;top:286.76px;line-height:9.5px;font-family:"Liberation Sans",sans-serif;font-size:9.5px;font-weight:normal;color:#4a1405;transform:scaleX(0.8916);-webkit-text-stroke:0.25px #4a1405;'>0 %</div>
<div class="a" style="left:1.7px;top:300.35px;width:11.5px;height:18.75px;background:#fedcbf"></div>
<div class="a" style="left:12px;top:300.05px;width:740.5px;height:19.35px;background:#88cdf8"></div>
<div class="a" style="left:12px;top:318.20000000000005px;width:740.5px;height:1.1px;background:#9fb7cc"></div>
<div class="a" style="left:12px;top:300.05px;width:740.5px;height:0.9px;background:#9fb7cc"></div>
<div class="a" style="left:12px;top:300.35px;width:1px;height:18.75px;background:#a4b8c8"></div>
<div class="a" style="left:53.3px;top:300.35px;width:0.9px;height:18.75px;background:#9cbcd4"></div>
<div class="a" style="left:303px;top:300.35px;width:0.9px;height:18.75px;background:#9cbcd4"></div>
<div class="a" style="left:453.3px;top:300.35px;width:0.9px;height:18.75px;background:#9cbcd4"></div>
<div class="a" style="left:601.5px;top:300.35px;width:0.9px;height:18.75px;background:#9cbcd4"></div>
<div class="a" style="left:27.6px;top:304.15000000000003px;width:10px;height:9.8px;border:1px solid #a48878;border-radius:2px;background:linear-gradient(160deg,#d2d6da 0%,#e8eaec 40%,#fbfbfb 80%)"></div>
<div class='t' style='left:55.6px;top:303.99px;line-height:10px;font-family:"Liberation Sans",sans-serif;font-size:10px;font-weight:normal;color:#0a2540;transform:scaleX(0.7081);-webkit-text-stroke:0.25px #0a2540;'>2.6 Use a drawer organizer when putting small items (pens, calculators, paper</div>
<svg class="a" style="left:305.6px;top:303.65000000000003px" width="12" height="12" viewBox="0 0 12 12"><circle cx="6" cy="6" r="5.5" fill="#e47b14"/><circle cx="6" cy="6" r="5.5" fill="none" stroke="#b3530a" stroke-width=".6"/><circle cx="6" cy="6" r="2.6" fill="#fff4dc"/><ellipse cx="5" cy="3" rx="3" ry="1.6" fill="#ffd9a0" opacity=".6"/></svg>
<div class='t' style='left:321px;top:305.51px;line-height:9.5px;font-family:"Liberation Sans",sans-serif;font-size:9.5px;font-weight:normal;color:#0a2540;transform:scaleX(0.7706);-webkit-text-stroke:0.25px #0a2540;'>Normal</div>
<svg class="a" style="left:457.2px;top:303.65000000000003px" width="11" height="13" viewBox="0 0 11 13"><path d="M.5 .5h6.5l3.5 3.5v8.5h-10z" fill="#f7f9fc" stroke="#9aa7b8" stroke-width=".8"/><path d="M7 .5v3.5h3.5" fill="#dde5ee" stroke="#9aa7b8" stroke-width=".6"/></svg>
<div class='t' style='left:471.3px;top:305.51px;line-height:9.5px;font-family:"Liberation Sans",sans-serif;font-size:9.5px;font-weight:normal;color:#0a2540;transform:scaleX(0.7275);-webkit-text-stroke:0.25px #0a2540;'>Created</div>
<div class='t' style='left:670px;top:305.51px;line-height:9.5px;font-family:"Liberation Sans",sans-serif;font-size:9.5px;font-weight:normal;color:#0a2540;transform:scaleX(0.8916);-webkit-text-stroke:0.25px #0a2540;'>0 %</div>
<div class="a" style="left:1.7px;top:319.1px;width:11.5px;height:18.75px;background:#fedcbf"></div>
<div class="a" style="left:12px;top:318.8px;width:740.5px;height:19.35px;background:#fea17b"></div>
<div class="a" style="left:12px;top:336.95000000000005px;width:740.5px;height:1.1px;background:#c99c88"></div>
<div class="a" style="left:12px;top:318.8px;width:740.5px;height:0.9px;background:#d0a48e"></div>
<div class="a" style="left:12px;top:319.1px;width:1px;height:18.75px;background:#bda294"></div>
<div class="a" style="left:53.3px;top:319.1px;width:0.9px;height:18.75px;background:#c9a08a"></div>
<div class="a" style="left:303px;top:319.1px;width:0.9px;height:18.75px;background:#c9a08a"></div>
<div class="a" style="left:453.3px;top:319.1px;width:0.9px;height:18.75px;background:#c9a08a"></div>
<div class="a" style="left:601.5px;top:319.1px;width:0.9px;height:18.75px;background:#c9a08a"></div>
<div class="a" style="left:27.6px;top:322.90000000000003px;width:10px;height:9.8px;border:1px solid #a48878;border-radius:2px;background:linear-gradient(160deg,#d2d6da 0%,#e8eaec 40%,#fbfbfb 80%)"></div>
<div class='t' style='left:55.6px;top:322.74px;line-height:10px;font-family:"Liberation Sans",sans-serif;font-size:10px;font-weight:normal;color:#4a1405;transform:scaleX(0.7166);-webkit-text-stroke:0.25px #4a1405;'>2.7 Put away the items you use rarely or sometimes. Following this step of</div>
<svg class="a" style="left:305.6px;top:322.40000000000003px" width="12" height="12" viewBox="0 0 12 12"><circle cx="6" cy="6" r="5.5" fill="#e47b14"/><circle cx="6" cy="6" r="5.5" fill="none" stroke="#b3530a" stroke-width=".6"/><circle cx="6" cy="6" r="2.6" fill="#fff4dc"/><ellipse cx="5" cy="3" rx="3" ry="1.6" fill="#ffd9a0" opacity=".6"/></svg>
<div class='t' style='left:321px;top:324.26px;line-height:9.5px;font-family:"Liberation Sans",sans-serif;font-size:9.5px;font-weight:normal;color:#4a1405;transform:scaleX(0.7706);-webkit-text-stroke:0.25px #4a1405;'>Normal</div>
<svg class="a" style="left:457.2px;top:322.40000000000003px" width="11" height="13" viewBox="0 0 11 13"><path d="M.5 .5h6.5l3.5 3.5v8.5h-10z" fill="#f7f9fc" stroke="#9aa7b8" stroke-width=".8"/><path d="M7 .5v3.5h3.5" fill="#dde5ee" stroke="#9aa7b8" stroke-width=".6"/></svg>
<div class='t' style='left:471.3px;top:324.26px;line-height:9.5px;font-family:"Liberation Sans",sans-serif;font-size:9.5px;font-weight:normal;color:#4a1405;transform:scaleX(0.7275);-webkit-text-stroke:0.25px #4a1405;'>Created</div>
<div class='t' style='left:670px;top:324.26px;line-height:9.5px;font-family:"Liberation Sans",sans-serif;font-size:9.5px;font-weight:normal;color:#4a1405;transform:scaleX(0.8916);-webkit-text-stroke:0.25px #4a1405;'>0 %</div>
<div class="a" style="left:1.7px;top:337.85px;width:11.5px;height:18.75px;background:#fedcbf"></div>
<div class="a" style="left:12px;top:337.55px;width:740.5px;height:19.35px;background:#88cdf8"></div>
<div class="a" style="left:12px;top:355.70000000000005px;width:740.5px;height:1.1px;background:#9fb7cc"></div>
<div class="a" style="left:12px;top:337.55px;width:740.5px;height:0.9px;background:#9fb7cc"></div>
<div class="a" style="left:12px;top:337.85px;width:1px;height:18.75px;background:#a4b8c8"></div>
<div class="a" style="left:53.3px;top:337.85px;width:0.9px;height:18.75px;background:#9cbcd4"></div>
<div class="a" style="left:303px;top:337.85px;width:0.9px;height:18.75px;background:#9cbcd4"></div>
<div class="a" style="left:453.3px;top:337.85px;width:0.9px;height:18.75px;background:#9cbcd4"></div>
<div class="a" style="left:601.5px;top:337.85px;width:0.9px;height:18.75px;background:#9cbcd4"></div>
<div class="a" style="left:27.6px;top:341.65000000000003px;width:10px;height:9.8px;border:1px solid #a48878;border-radius:2px;background:linear-gradient(160deg,#d2d6da 0%,#e8eaec 40%,#fbfbfb 80%)"></div>
<div class='t' style='left:55.6px;top:341.49px;line-height:10px;font-family:"Liberation Sans",sans-serif;font-size:10px;font-weight:normal;color:#0a2540;transform:scaleX(0.7047);-webkit-text-stroke:0.25px #0a2540;'>2.8 When everything is put away, place your office organization filing toolkit on</div>
<svg class="a" style="left:305.6px;top:341.15000000000003px" width="12" height="12" viewBox="0 0 12 12"><circle cx="6" cy="6" r="5.5" fill="#e47b14"/><circle cx="6" cy="6" r="5.5" fill="none" stroke="#b3530a" stroke-width=".6"/><circle cx="6" cy="6" r="2.6" fill="#fff4dc"/><ellipse cx="5" cy="3" rx="3" ry="1.6" fill="#ffd9a0" opacity=".6"/></svg>
<div class='t' style='left:321px;top:343.01px;line-height:9.5px;font-family:"Liberation Sans",sans-serif;font-size:9.5px;font-weight:normal;color:#0a2540;transform:scaleX(0.7706);-webkit-text-stroke:0.25px #0a2540;'>Normal</div>
<svg class="a" style="left:457.2px;top:341.15000000000003px" width="11" height="13" viewBox="0 0 11 13"><path d="M.5 .5h6.5l3.5 3.5v8.5h-10z" fill="#f7f9fc" stroke="#9aa7b8" stroke-width=".8"/><path d="M7 .5v3.5h3.5" fill="#dde5ee" stroke="#9aa7b8" stroke-width=".6"/></svg>
<div class='t' style='left:471.3px;top:343.01px;line-height:9.5px;font-family:"Liberation Sans",sans-serif;font-size:9.5px;font-weight:normal;color:#0a2540;transform:scaleX(0.7275);-webkit-text-stroke:0.25px #0a2540;'>Created</div>
<div class='t' style='left:670px;top:343.01px;line-height:9.5px;font-family:"Liberation Sans",sans-serif;font-size:9.5px;font-weight:normal;color:#0a2540;transform:scaleX(0.8916);-webkit-text-stroke:0.25px #0a2540;'>0 %</div>
<div class="a" style="left:1.7px;top:356.6px;width:10.8px;height:99.2px;background:#fedcbf"></div>
<div class='t' style='left:28.3px;top:358.70px;line-height:9.8px;font-family:"Liberation Sans",sans-serif;font-size:9.8px;font-weight:normal;color:#444;-webkit-text-stroke:0.25px #444;'>·</div>
<div class='t' style='left:69px;top:359.60px;line-height:9.8px;font-family:"Liberation Sans",sans-serif;font-size:9.8px;font-weight:normal;color:#2f2f9a;transform:scaleX(1.0117);-webkit-text-stroke:0.25px #2f2f9a;'>The first tray of the toolkit is for the items you deal</div>
<div class='t' style='left:28px;top:371.53px;line-height:9.8px;font-family:"Liberation Sans",sans-serif;font-size:9.8px;font-weight:normal;color:#2f2f9a;transform:scaleX(0.9945);-webkit-text-stroke:0.25px #2f2f9a;'>with on a daily basis. At the end of each day you</div>
<div class='t' style='left:28px;top:383.46px;line-height:9.8px;font-family:"Liberation Sans",sans-serif;font-size:9.8px;font-weight:normal;color:#2f2f9a;transform:scaleX(0.9984);-webkit-text-stroke:0.25px #2f2f9a;'>need to clean the tray and leave there only items that</div>
<div class='t' style='left:28px;top:395.39px;line-height:9.8px;font-family:"Liberation Sans",sans-serif;font-size:9.8px;font-weight:normal;color:#2f2f9a;transform:scaleX(0.9942);-webkit-text-stroke:0.25px #2f2f9a;'>will be necessary next day - in such a way you will</div>
<div class='t' style='left:28px;top:407.32px;line-height:9.8px;font-family:"Liberation Sans",sans-serif;font-size:9.8px;font-weight:normal;color:#2f2f9a;transform:scaleX(1.0020);-webkit-text-stroke:0.25px #2f2f9a;'>get a clear and refreshed roster of the items to be</div>
<div class='t' style='left:28px;top:419.25px;line-height:9.8px;font-family:"Liberation Sans",sans-serif;font-size:9.8px;font-weight:normal;color:#2f2f9a;transform:scaleX(0.9971);-webkit-text-stroke:0.25px #2f2f9a;'>used when you enter your office in the morning. The</div>
<div class='t' style='left:28px;top:431.18px;line-height:9.8px;font-family:"Liberation Sans",sans-serif;font-size:9.8px;font-weight:normal;color:#2f2f9a;transform:scaleX(0.9868);-webkit-text-stroke:0.25px #2f2f9a;'>second tray of the office organization design</div>
<div class='t' style='left:28px;top:443.11px;line-height:9.8px;font-family:"Liberation Sans",sans-serif;font-size:9.8px;font-weight:normal;color:#2f2f9a;transform:scaleX(1.0013);-webkit-text-stroke:0.25px #2f2f9a;'>toolkit is for long-term projects and activities.</div>
<div class="a" style="left:1.7px;top:455.8px;width:11.5px;height:18.75px;background:#fedcbf"></div>
<div class="a" style="left:12px;top:455.5px;width:740.5px;height:19.35px;background:#fea17b"></div>
<div class="a" style="left:12px;top:473.65000000000003px;width:740.5px;height:1.1px;background:#c99c88"></div>
<div class="a" style="left:12px;top:455.5px;width:740.5px;height:0.9px;background:#d0a48e"></div>
<div class="a" style="left:12px;top:455.8px;width:1px;height:18.75px;background:#bda294"></div>
<div class="a" style="left:53.3px;top:455.8px;width:0.9px;height:18.75px;background:#c9a08a"></div>
<div class="a" style="left:303px;top:455.8px;width:0.9px;height:18.75px;background:#c9a08a"></div>
<div class="a" style="left:453.3px;top:455.8px;width:0.9px;height:18.75px;background:#c9a08a"></div>
<div class="a" style="left:601.5px;top:455.8px;width:0.9px;height:18.75px;background:#c9a08a"></div>
<div class="a" style="left:27.6px;top:459.6px;width:10px;height:9.8px;border:1px solid #a48878;border-radius:2px;background:linear-gradient(160deg,#d2d6da 0%,#e8eaec 40%,#fbfbfb 80%)"></div>
<div class='t' style='left:55.6px;top:459.44px;line-height:10px;font-family:"Liberation Sans",sans-serif;font-size:10px;font-weight:normal;color:#4a1405;transform:scaleX(0.7178);-webkit-text-stroke:0.25px #4a1405;'>2.9 Keep your desk clear of everything except for what you’re working on at</div>
<svg class="a" style="left:305.6px;top:459.1px" width="12" height="12" viewBox="0 0 12 12"><circle cx="6" cy="6" r="5.5" fill="#e47b14"/><circle cx="6" cy="6" r="5.5" fill="none" stroke="#b3530a" stroke-width=".6"/><circle cx="6" cy="6" r="2.6" fill="#fff4dc"/><ellipse cx="5" cy="3" rx="3" ry="1.6" fill="#ffd9a0" opacity=".6"/></svg>
<div class='t' style='left:321px;top:460.96px;line-height:9.5px;font-family:"Liberation Sans",sans-serif;font-size:9.5px;font-weight:normal;color:#4a1405;transform:scaleX(0.7706);-webkit-text-stroke:0.25px #4a1405;'>Normal</div>
<svg class="a" style="left:457.2px;top:459.1px" width="11" height="13" viewBox="0 0 11 13"><path d="M.5 .5h6.5l3.5 3.5v8.5h-10z" fill="#f7f9fc" stroke="#9aa7b8" stroke-width=".8"/><path d="M7 .5v3.5h3.5" fill="#dde5ee" stroke="#9aa7b8" stroke-width=".6"/></svg>
<div class='t' style='left:471.3px;top:460.96px;line-height:9.5px;font-family:"Liberation Sans",sans-serif;font-size:9.5px;font-weight:normal;color:#4a1405;transform:scaleX(0.7275);-webkit-text-stroke:0.25px #4a1405;'>Created</div>
<div class='t' style='left:670px;top:460.96px;line-height:9.5px;font-family:"Liberation Sans",sans-serif;font-size:9.5px;font-weight:normal;color:#4a1405;transform:scaleX(0.8916);-webkit-text-stroke:0.25px #4a1405;'>0 %</div>
<div class="a" style="left:1.7px;top:474.55px;width:10.8px;height:100px;background:#fedcbf"></div>
<div class='t' style='left:28px;top:478.50px;line-height:9.8px;font-family:"Liberation Sans",sans-serif;font-size:9.8px;font-weight:normal;color:#2f2f9a;transform:scaleX(1.0087);-webkit-text-stroke:0.25px #2f2f9a;'>The last office organization help step is the hardest one: keep</div>
<div class='t' style='left:28px;top:490.43px;line-height:9.8px;font-family:"Liberation Sans",sans-serif;font-size:9.8px;font-weight:normal;color:#2f2f9a;transform:scaleX(0.9930);-webkit-text-stroke:0.25px #2f2f9a;'>your desk clear of everything except for what you’re working on</div>
<div class='t' style='left:28px;top:502.36px;line-height:9.8px;font-family:"Liberation Sans",sans-serif;font-size:9.8px;font-weight:normal;color:#2f2f9a;transform:scaleX(1.0041);-webkit-text-stroke:0.25px #2f2f9a;'>at that moment. When your workplace is re-organized, it is time</div>
<div class='t' style='left:28px;top:514.29px;line-height:9.8px;font-family:"Liberation Sans",sans-serif;font-size:9.8px;font-weight:normal;color:#2f2f9a;transform:scaleX(0.9962);-webkit-text-stroke:0.25px #2f2f9a;'>to clean it up. Instead of getting back to your old habits and</div>
<div class='t' style='left:28px;top:526.22px;line-height:9.8px;font-family:"Liberation Sans",sans-serif;font-size:9.8px;font-weight:normal;color:#2f2f9a;transform:scaleX(0.9795);-webkit-text-stroke:0.25px #2f2f9a;'>putting your papers and office accessories on your desk, you</div>
<div class='t' style='left:28px;top:538.15px;line-height:9.8px;font-family:"Liberation Sans",sans-serif;font-size:9.8px;font-weight:normal;color:#2f2f9a;transform:scaleX(0.9816);-webkit-text-stroke:0.25px #2f2f9a;'>should keep only necessary things and papers at hand, whilst the</div>
<div class='t' style='left:28px;top:550.08px;line-height:9.8px;font-family:"Liberation Sans",sans-serif;font-size:9.8px;font-weight:normal;color:#2f2f9a;transform:scaleX(0.9874);-webkit-text-stroke:0.25px #2f2f9a;'>rest office accessories and documents are put away until the</div>
<div class='t' style='left:28px;top:562.01px;line-height:9.8px;font-family:"Liberation Sans",sans-serif;font-size:9.8px;font-weight:normal;color:#2f2f9a;transform:scaleX(0.9812);-webkit-text-stroke:0.25px #2f2f9a;'>moment you need them</div>
<div class="a" style="left:1.7px;top:574.6px;width:10.8px;height:19.699999999999932px;background:#fedcbf"></div>
<div class="a" style="left:12.5px;top:574.6px;width:740.0px;height:19.699999999999932px;background:#ddb685"></div>
<div class="a" style="left:12.5px;top:574.6px;width:740.0px;height:1.2px;background:#f3ece2"></div>
<div class="a" style="left:12.5px;top:574.6px;width:1.5px;height:19.699999999999932px;background:#f3ece2"></div>
<div class="a" style="left:1.7px;top:593.8px;width:750.8px;height:1px;background:#c2b8ae"></div>
<div class="a" style="left:12.5px;top:574.1px;width:740.0px;height:1px;background:#c6c0b8"></div>
<div class="a" style="left:0px;top:711.5px;width:752.5px;height:1.2px;background:#b5a898"></div>
<div class="a" style="left:0px;top:711.5px;width:1.7px;height:19.7px;background:#b9b9b9"></div>
<div class="a" style="left:1.7px;top:712.7px;width:750.8px;height:17.5px;background:#ddb685"></div>
<div class="a" style="left:55px;top:713.5px;width:247px;height:16px;background:#e6e9ec;border-left:1px solid #f5f5f5"></div>
<div class='t' style='left:57.3px;top:717.00px;line-height:9.8px;font-family:"Liberation Sans",sans-serif;font-size:9.8px;font-weight:normal;color:#222;transform:scaleX(0.9768);-webkit-text-stroke:0.25px #222;'>Count: 12</div>
<div class="a" style="left:0px;top:730px;width:752.5px;height:1.6px;background:#a9a9a9"></div>
<div class="a" style="left:0px;top:731.2px;width:752.5px;height:22px;background:#fff"></div>
<div class="a" style="left:3.5px;top:733.3px;width:53px;height:18px;background:linear-gradient(#efefef 0%,#e6e6e6 50%,#d8d8d8 100%);border:1px solid #a8a8a8;border-top:none"></div>
<div class="a" style="left:56.5px;top:733.3px;width:18.5px;height:18px;background:linear-gradient(#f0f0f0,#dedede);border:1px solid #a8a8a8;border-left:none;border-top:none"></div>
<div class='t' style='left:5px;top:738.52px;line-height:8.6px;font-family:"Liberation Sans",sans-serif;font-size:8.6px;font-weight:normal;color:#222;transform:scaleX(0.9363);-webkit-text-stroke:0.25px #222;'>Note</div>
<div class='t' style='left:58px;top:738.52px;line-height:8.6px;font-family:"Liberation Sans",sans-serif;font-size:8.6px;font-weight:normal;color:#222;transform:scaleX(1.0847);-webkit-text-stroke:0.25px #222;'>S...</div>
<div class="a" style="left:0px;top:753px;width:752.5px;height:1px;background:#c9c9c9"></div>
<div class="a" style="left:0px;top:754px;width:960px;height:14px;background:#eeecea"></div>
<div class="a" style="left:45px;top:766.2px;width:44px;height:3px;border:1px solid #777;border-radius:2px 2px 0 0;background:#dcdcdc"></div>
<div class="a" style="left:91.5px;top:766.2px;width:45.5px;height:3px;border:1px solid #777;border-radius:2px 2px 0 0;background:#dcdcdc"></div>
<div class="a" style="left:137.8px;top:766.2px;width:44.19999999999999px;height:3px;border:1px solid #777;border-radius:2px 2px 0 0;background:#dcdcdc"></div>
<div class="a" style="left:184px;top:766.2px;width:45px;height:3px;border:1px solid #777;border-radius:2px 2px 0 0;background:#dcdcdc"></div>
<div class="a" style="left:752.8px;top:57px;width:207.20000000000005px;height:697px;background:#f0f0f0"></div>
<div class="a" style="left:752.2px;top:57px;width:3.2px;height:697px;background:#c8c8c8"></div>
<div class="a" style="left:752.2px;top:76.5px;width:1.8px;height:674px;background:#555"></div>
<div class="a" style="left:958.6px;top:57px;width:1.4px;height:20px;background:#d0d0d0"></div>
<div class="a" style="left:958.6px;top:77px;width:1.4px;height:330px;background:#555"></div>
<div class="a" style="left:958.6px;top:407px;width:1.4px;height:343px;background:#a8a8a8"></div>
<div class="a" style="left:755.2px;top:57px;width:202.4px;height:0.9px;background:#8c8c8c"></div>
<div class="a" style="left:755.2px;top:57.9px;width:202.4px;height:15.100000000000001px;background:linear-gradient(#ffffff,#f6f7f9)"></div>
<div class='t' style='left:757px;top:61.24px;line-height:9.4px;font-family:"Liberation Sans",sans-serif;font-size:9.4px;font-weight:normal;color:#262626;transform:scaleX(0.8476);-webkit-text-stroke:0.25px #262626;'>Categories Bar</div>
<div class="a" style="left:921px;top:60.9px;width:11px;height:11px;border:1px solid #77838f;border-radius:2px;background:linear-gradient(#d5dbe3,#a9b3c0)"></div>
<div class="a" style="left:923.3px;top:63.3px;width:6.4px;height:5.2px;border:.8px solid #4a5666;background:#fff"></div>
<div class="a" style="left:925.2px;top:65.3px;width:2.6px;height:1.2px;background:#4a5666"></div>
<svg class="a" style="left:934px;top:60.9px" width="9" height="11" viewBox="0 0 9 11"><path d="M1.5 1h6M2.5 1v4h4V1M1 5.5h7M4.5 5.5V10.5" fill="none" stroke="#858585" stroke-width=".9"/></svg>
<div class="a" style="left:945px;top:60.4px;width:11.5px;height:11.5px;border:1px solid #8a3c32;border-radius:2px;background:linear-gradient(#d98c80,#b8564a)"></div>
<svg class="a" style="left:947.6px;top:63.0px" width="7" height="7"><path d="M1.5 1.5L5.5 5.5M5.5 1.5L1.5 5.5" stroke="#f4dcd8" stroke-width="1.3"/></svg>
<div class="a" style="left:755.2px;top:73px;width:202.4px;height:23.5px;background:linear-gradient(#f5f7fb 0%,#e8ecf4 45%,#d6dcea 100%)"></div>
<div class="a" style="left:755.2px;top:95.8px;width:202.4px;height:0.9px;background:#a6afbd"></div>
<div class="a" style="left:758px;top:76px;width:1.2px;height:18px;background:repeating-linear-gradient(#7f8898 0 .9px,transparent .9px 3px)"></div>
<svg class="a" style="left:764px;top:79.8px" width="13" height="12" viewBox="0 0 13 12"><rect x=".5" y="2" width="10.5" height="9.5" fill="#f5f7fa" stroke="#d3d9e0" stroke-width=".5"/><rect x=".5" y="1.8" width="10.5" height="1.8" fill="#5b94d6"/><rect x=".5" y="10.2" width="10.5" height="1.4" fill="#8c939c"/><path d="M7.8 3h5M10.3 .5v5" stroke="#3a9a4a" stroke-width="1.7"/></svg>
<svg class="a" style="left:782px;top:79.8px" width="13" height="12" viewBox="0 0 13 12"><path d="M.5 2h6" stroke="#4a7fc8" stroke-width="1.6"/><rect x="2" y="3.5" width="1.6" height="8" fill="#4a7fc8"/><rect x="4.2" y="4.5" width="4.5" height="2" fill="#5a8fd8"/><rect x="4.2" y="7.3" width="4.5" height="2" fill="#5a8fd8"/><rect x="4.2" y="10" width="4.5" height="1.8" fill="#5a8fd8"/><path d="M8 3h5M10.5 .5v5" stroke="#3a9a4a" stroke-width="1.7"/></svg>
<svg class="a" style="left:800px;top:79.8px" width="13" height="12" viewBox="0 0 13 12"><rect x=".5" y="2" width="10.5" height="9.5" fill="#f5f7fa" stroke="#d3d9e0" stroke-width=".5"/><rect x=".5" y="1.8" width="10.5" height="1.8" fill="#5b94d6"/><rect x=".5" y="10.2" width="10.5" height="1.4" fill="#8c939c"/><path d="M3 10.5l1-2.5 6.5-7 1.6 1.5-6.6 7z" fill="#e9c45a" stroke="#c9a040" stroke-width=".5"/><path d="M10.5 1l1.6 1.5" stroke="#d04a3a" stroke-width="1.4"/></svg>
<svg class="a" style="left:818px;top:79.8px" width="13" height="12" viewBox="0 0 13 12"><rect x=".5" y="2" width="10.5" height="9.5" fill="#f5f7fa" stroke="#d3d9e0" stroke-width=".5"/><rect x=".5" y="1.8" width="10.5" height="1.8" fill="#5b94d6"/><rect x=".5" y="10.2" width="10.5" height="1.4" fill="#8c939c"/><path d="M7 6.5l4.5 5M11.5 6.5l-4.5 5" stroke="#e05a4a" stroke-width="1.2"/></svg>
<svg class="a" style="left:836px;top:89px" width="5" height="3"><path d="M0 0H5L2.5 3Z" fill="#111"/></svg>
<div class="a" style="left:755.2px;top:96.7px;width:202.4px;height:310px;background:#fff"></div>
<div class="a" style="left:755.2px;top:96.7px;width:202.4px;height:12.5px;background:linear-gradient(#ffffff,#eff0f2);border-bottom:1px solid #e3e3e3"></div>
<div class="a" style="left:914px;top:96.7px;width:1px;height:12.5px;background:#e0e0e0"></div>
<div class="a" style="left:940.5px;top:96.7px;width:1px;height:12.5px;background:#e6e6e6"></div>
<div class='t' style='left:917px;top:98.75px;line-height:8.8px;font-family:"Liberation Sans",sans-serif;font-size:8.8px;font-weight:normal;color:#333;transform:scaleX(1.0227);-webkit-text-stroke:0.25px #333;'>Un...</div>
<div class='t' style='left:943px;top:98.75px;line-height:8.8px;font-family:"Liberation Sans",sans-serif;font-size:8.8px;font-weight:normal;color:#333;transform:scaleX(1.0226);-webkit-text-stroke:0.25px #333;'>T...</div>
<div class="a" style="left:759.2px;top:113.9px;width:6.6px;height:6.2px;border:1px solid #8b98aa;background:#fafafa"></div>
<div class="a" style="left:760.8px;top:116.6px;width:3.4px;height:0.9px;background:#333"></div>
<div class="a" style="left:766px;top:117px;width:3.5px;height:0.8px;background:#b8b8b8"></div>
<svg class="a" style="left:769.5px;top:112.5px" width="12" height="10" viewBox="0 0 12 10"><path d="M.5 1h4l1 1.3h4.5V9H.5z" fill="#e8c23c" stroke="#b08a18" stroke-width=".6"/><path d="M.5 9l2-5h9l-2 5z" fill="#f7dd6a" stroke="#b08a18" stroke-width=".6"/></svg>
<div class="a" style="left:784px;top:110.4px;width:173.6px;height:13.1px;border:1px solid #222;background:#fff"></div>
<div class="a" style="left:914px;top:111.4px;width:43px;height:11.1px;background:#ececec"></div>
<svg class="a" style="left:785.5px;top:112px" width="13" height="10" viewBox="0 0 13 10"><path d="M6.5 2C4.5.5 2 .5.5 1.5V9c1.5-1 4-1 6 .5C8.5 8 11 8 12.5 9V1.5C11 .5 8.5.5 6.5 2z" fill="#e7f0fa" stroke="#c79a68" stroke-width=".8"/><path d="M6.5 2v7.5" stroke="#6b94c9" stroke-width=".8"/></svg>
<div class="a" style="left:776.4px;top:123.4px;width:0.8px;height:20px;background:#c5c5c5"></div>
<div class="a" style="left:776.4px;top:130px;width:8px;height:0.8px;background:#c5c5c5"></div>
<div class="a" style="left:776.4px;top:143.2px;width:8px;height:0.8px;background:#c5c5c5"></div>
<svg class="a" style="left:786px;top:125.5px" width="13" height="10" viewBox="0 0 13 10"><circle cx="3.3" cy="2.6" r="2.3" fill="#e5a447"/><path d="M0 10c0-3 1.5-4.4 3.3-4.4S6.6 7 6.6 10z" fill="#3a6fd0"/><circle cx="8.8" cy="2.6" r="2.3" fill="#9a4a14"/><path d="M5.5 10c0-3 1.5-4.4 3.3-4.4S12.1 7 12.1 10z" fill="#3aa34a"/></svg>
<svg class="a" style="left:786px;top:138.8px" width="13" height="10" viewBox="0 0 13 10"><circle cx="3.3" cy="2.6" r="2.3" fill="#e5a447"/><path d="M0 10c0-3 1.5-4.4 3.3-4.4S6.6 7 6.6 10z" fill="#3a6fd0"/><circle cx="8.8" cy="2.6" r="2.3" fill="#9a4a14"/><path d="M5.5 10c0-3 1.5-4.4 3.3-4.4S12.1 7 12.1 10z" fill="#3aa34a"/></svg>
<div class='t' style='left:801.4px;top:112.52px;line-height:8.6px;font-family:"Liberation Sans",sans-serif;font-size:8.6px;font-weight:bold;color:#000;transform:scaleX(1.0330);'>Office Organization Check</div>
<div class='t' style='left:929.5px;top:111.84px;line-height:9.4px;font-family:"Liberation Sans",sans-serif;font-size:9.4px;font-weight:bold;color:#000;transform:scaleX(1.0060);'>12</div>
<div class='t' style='left:945px;top:111.84px;line-height:9.4px;font-family:"Liberation Sans",sans-serif;font-size:9.4px;font-weight:bold;color:#000;transform:scaleX(1.0539);'>12</div>
<div class='t' style='left:801.4px;top:125.82px;line-height:8.6px;font-family:"Liberation Sans",sans-serif;font-size:8.6px;font-weight:bold;color:#000;transform:scaleX(1.0667);'>1.What you will need to a</div>
<div class='t' style='left:934.5px;top:125.14px;line-height:9.4px;font-family:"Liberation Sans",sans-serif;font-size:9.4px;font-weight:bold;color:#000;transform:scaleX(1.0539);'>3</div>
<div class='t' style='left:951px;top:125.14px;line-height:9.4px;font-family:"Liberation Sans",sans-serif;font-size:9.4px;font-weight:bold;color:#000;transform:scaleX(1.0539);'>3</div>
<div class='t' style='left:801.4px;top:139.12px;line-height:8.6px;font-family:"Liberation Sans",sans-serif;font-size:8.6px;font-weight:bold;color:#000;transform:scaleX(1.0425);'>2.Following office organiz</div>
<div class='t' style='left:934.5px;top:138.44px;line-height:9.4px;font-family:"Liberation Sans",sans-serif;font-size:9.4px;font-weight:bold;color:#000;transform:scaleX(1.0539);'>9</div>
<div class='t' style='left:951px;top:138.44px;line-height:9.4px;font-family:"Liberation Sans",sans-serif;font-size:9.4px;font-weight:bold;color:#000;transform:scaleX(1.0539);'>9</div>
<div class="a" style="left:755.2px;top:406.8px;width:202.4px;height:3.4px;background:#bdbdbd"></div>
<div class="a" style="left:755.2px;top:410.2px;width:202.4px;height:17.100000000000023px;background:linear-gradient(#ffffff,#f6f7f9)"></div>
<div class='t' style='left:757px;top:414.54px;line-height:9.4px;font-family:"Liberation Sans",sans-serif;font-size:9.4px;font-weight:normal;color:#262626;transform:scaleX(0.8544);-webkit-text-stroke:0.25px #262626;'>Filters Bar</div>
<div class="a" style="left:921px;top:413.2px;width:11px;height:11px;border:1px solid #77838f;border-radius:2px;background:linear-gradient(#d5dbe3,#a9b3c0)"></div>
<div class="a" style="left:923.3px;top:415.59999999999997px;width:6.4px;height:5.2px;border:.8px solid #4a5666;background:#fff"></div>
<div class="a" style="left:925.2px;top:417.59999999999997px;width:2.6px;height:1.2px;background:#4a5666"></div>
<svg class="a" style="left:934px;top:413.2px" width="9" height="11" viewBox="0 0 9 11"><path d="M1.5 1h6M2.5 1v4h4V1M1 5.5h7M4.5 5.5V10.5" fill="none" stroke="#858585" stroke-width=".9"/></svg>
<div class="a" style="left:945px;top:412.7px;width:11.5px;height:11.5px;border:1px solid #8a3c32;border-radius:2px;background:linear-gradient(#d98c80,#b8564a)"></div>
<svg class="a" style="left:947.6px;top:415.3px" width="7" height="7"><path d="M1.5 1.5L5.5 5.5M5.5 1.5L1.5 5.5" stroke="#f4dcd8" stroke-width="1.3"/></svg>
<div class="a" style="left:755.2px;top:427.3px;width:202.4px;height:23px;background:linear-gradient(#f5f7fb 0%,#e8ecf4 45%,#d6dcea 100%)"></div>
<div class="a" style="left:758px;top:430px;width:1.2px;height:18px;background:repeating-linear-gradient(#7f8898 0 .9px,transparent .9px 3px)"></div>
<div class="a" style="left:760.7px;top:431px;width:69.5px;height:16.3px;background:linear-gradient(#bcd6f0,#a9c9ea);border:1px solid #9dbbe0"></div>
<div class='t' style='left:764px;top:434.50px;line-height:9.8px;font-family:"Liberation Sans",sans-serif;font-size:9.8px;font-weight:normal;color:#5f7896;transform:scaleX(0.9181);-webkit-text-stroke:0.25px #5f7896;'>Custom</div>
<div class="a" style="left:826px;top:432.5px;width:3.5px;height:13.5px;background:#fff;border:1px solid #aaa"></div>
<svg class="a" style="left:833px;top:432px" width="16" height="14" viewBox="0 0 16 14"><path d="M1 8h4v5H1z" fill="#e4e0f6" stroke="#8a7fd0" stroke-width=".7"/><path d="M5 11l2-4 5-5 2 2-5 5z" fill="#52b04a" stroke="#2f7d2a" stroke-width=".7"/><path d="M3 7c1-3 4-4 7-3" fill="none" stroke="#6d8fd8" stroke-width=".8"/></svg>
<svg class="a" style="left:846.5px;top:437px" width="4" height="3"><path d="M0 0H4L2 3Z" fill="#111"/></svg>
<svg class="a" style="left:859px;top:432px" width="14" height="13" viewBox="0 0 14 13"><path d="M2 11L9 2l4 3-6 7H3z" fill="#f3f3f3" stroke="#8e8e8e" stroke-width=".9"/><path d="M1 12h9" stroke="#9a9a9a" stroke-width=".8"/></svg>
<svg class="a" style="left:878px;top:433.5px" width="10" height="10"><path d="M1.5 1.5L8.5 8.5M8.5 1.5L1.5 8.5" stroke="#b0b4ba" stroke-width="2"/></svg>
<svg class="a" style="left:894px;top:443px" width="4" height="3"><path d="M0 0H4L2 3Z" fill="#111"/></svg>
<div class="a" style="left:755.2px;top:450.3px;width:202.4px;height:0.8px;background:#a6afbd"></div>
<div class="a" style="left:755.5px;top:450.5px;width:202px;height:142.5px;background:#f0f0f0;border-top:1px solid #c8c8c8"></div>
<div class="a" style="left:755.5px;top:465.6px;width:202px;height:1px;background:#d3d3d3"></div>
<div class='t' style='left:767.5px;top:453.91px;line-height:9.2px;font-family:"Liberation Sans",sans-serif;font-size:9.2px;font-weight:normal;color:#222;transform:scaleX(0.8519);-webkit-text-stroke:0.25px #222;'>Completion</div>
<div class="a" style="left:944.3px;top:451.3px;width:11.7px;height:14.200000000000022px;background:linear-gradient(#fbfbfb,#e4e4e4);border:1px solid #9a9a9a"></div>
<svg class="a" style="left:947.3px;top:456.70px" width="6" height="3.5"><path d="M0 0H6L3 3.5Z" fill="#000"/></svg>
<div class="a" style="left:755.5px;top:481.47px;width:202px;height:1px;background:#d3d3d3"></div>
<div class='t' style='left:767.5px;top:469.51px;line-height:9.2px;font-family:"Liberation Sans",sans-serif;font-size:9.2px;font-weight:normal;color:#222;transform:scaleX(0.8576);-webkit-text-stroke:0.25px #222;'>Due Date</div>
<div class="a" style="left:944.3px;top:466.90000000000003px;width:11.7px;height:14.470000000000004px;background:linear-gradient(#fbfbfb,#e4e4e4);border:1px solid #9a9a9a"></div>
<svg class="a" style="left:947.3px;top:472.44px" width="6" height="3.5"><path d="M0 0H6L3 3.5Z" fill="#000"/></svg>
<div class="a" style="left:755.5px;top:497.34000000000003px;width:202px;height:1px;background:#d3d3d3"></div>
<div class='t' style='left:767.5px;top:485.38px;line-height:9.2px;font-family:"Liberation Sans",sans-serif;font-size:9.2px;font-weight:normal;color:#222;transform:scaleX(0.9022);-webkit-text-stroke:0.25px #222;'>Status</div>
<div class="a" style="left:944.3px;top:482.77000000000004px;width:11.7px;height:14.470000000000004px;background:linear-gradient(#fbfbfb,#e4e4e4);border:1px solid #9a9a9a"></div>
<svg class="a" style="left:947.3px;top:488.31px" width="6" height="3.5"><path d="M0 0H6L3 3.5Z" fill="#000"/></svg>
<div class="a" style="left:755.5px;top:513.21px;width:202px;height:1px;background:#d3d3d3"></div>
<div class='t' style='left:767.5px;top:501.25px;line-height:9.2px;font-family:"Liberation Sans",sans-serif;font-size:9.2px;font-weight:normal;color:#222;transform:scaleX(0.8918);-webkit-text-stroke:0.25px #222;'>Priority</div>
<div class="a" style="left:944.3px;top:498.64000000000004px;width:11.7px;height:14.470000000000004px;background:linear-gradient(#fbfbfb,#e4e4e4);border:1px solid #9a9a9a"></div>
<svg class="a" style="left:947.3px;top:504.18px" width="6" height="3.5"><path d="M0 0H6L3 3.5Z" fill="#000"/></svg>
<div class="a" style="left:755.5px;top:529.08px;width:202px;height:1px;background:#d3d3d3"></div>
<div class='t' style='left:767.5px;top:517.12px;line-height:9.2px;font-family:"Liberation Sans",sans-serif;font-size:9.2px;font-weight:normal;color:#222;transform:scaleX(0.8487);-webkit-text-stroke:0.25px #222;'>Task Name</div>
<div class="a" style="left:755.5px;top:544.95px;width:202px;height:1px;background:#d3d3d3"></div>
<div class='t' style='left:767.5px;top:532.99px;line-height:9.2px;font-family:"Liberation Sans",sans-serif;font-size:9.2px;font-weight:normal;color:#222;transform:scaleX(0.8965);-webkit-text-stroke:0.25px #222;'>Date Created</div>
<div class="a" style="left:944.3px;top:530.38px;width:11.7px;height:14.470000000000004px;background:linear-gradient(#fbfbfb,#e4e4e4);border:1px solid #9a9a9a"></div>
<svg class="a" style="left:947.3px;top:535.92px" width="6" height="3.5"><path d="M0 0H6L3 3.5Z" fill="#000"/></svg>
<div class="a" style="left:755.5px;top:560.82px;width:202px;height:1px;background:#d3d3d3"></div>
<div class='t' style='left:767.5px;top:548.86px;line-height:9.2px;font-family:"Liberation Sans",sans-serif;font-size:9.2px;font-weight:normal;color:#222;transform:scaleX(0.8962);-webkit-text-stroke:0.25px #222;'>Date Last Modifi</div>
<div class="a" style="left:944.3px;top:546.25px;width:11.7px;height:14.470000000000004px;background:linear-gradient(#fbfbfb,#e4e4e4);border:1px solid #9a9a9a"></div>
<svg class="a" style="left:947.3px;top:551.78px" width="6" height="3.5"><path d="M0 0H6L3 3.5Z" fill="#000"/></svg>
<div class="a" style="left:755.5px;top:576.69px;width:202px;height:1px;background:#d3d3d3"></div>
<div class='t' style='left:767.5px;top:564.73px;line-height:9.2px;font-family:"Liberation Sans",sans-serif;font-size:9.2px;font-weight:normal;color:#222;transform:scaleX(0.8782);-webkit-text-stroke:0.25px #222;'>Date Opened</div>
<div class="a" style="left:944.3px;top:562.12px;width:11.7px;height:14.470000000000004px;background:linear-gradient(#fbfbfb,#e4e4e4);border:1px solid #9a9a9a"></div>
<svg class="a" style="left:947.3px;top:567.66px" width="6" height="3.5"><path d="M0 0H6L3 3.5Z" fill="#000"/></svg>
<div class='t' style='left:767.5px;top:580.60px;line-height:9.2px;font-family:"Liberation Sans",sans-serif;font-size:9.2px;font-weight:normal;color:#222;transform:scaleX(0.8661);-webkit-text-stroke:0.25px #222;'>Date Completed</div>
<div class="a" style="left:944.3px;top:577.99px;width:11.7px;height:13.409999999999945px;background:linear-gradient(#fbfbfb,#e4e4e4);border:1px solid #9a9a9a"></div>
<svg class="a" style="left:947.3px;top:583.00px" width="6" height="3.5"><path d="M0 0H6L3 3.5Z" fill="#000"/></svg>
<div class="a" style="left:829px;top:450.5px;width:1.2px;height:142.5px;background:#cdcdcd"></div>
<div class="a" style="left:755.5px;top:592.5px;width:202px;height:1px;background:#b9b9b9"></div>
<div class="a" style="left:755.2px;top:728px;width:202.4px;height:3px;background:#fbfbfb;border-top:1px solid #c4c4c4"></div>
<div class="a" style="left:755.2px;top:731px;width:202.4px;height:19.5px;background:#fff"></div>
<div class="a" style="left:755px;top:732.7px;width:44px;height:16.3px;background:#fbfbfb;border:1px solid #b9b9b9;border-top:none"></div>
<div class="a" style="left:799px;top:732.7px;width:58px;height:16.3px;background:#dedede;border:1px solid #b9b9b9;border-top:none;border-left:none"></div>
<div class='t' style='left:760px;top:736.47px;line-height:8.9px;font-family:"Liberation Sans",sans-serif;font-size:8.9px;font-weight:normal;color:#333;transform:scaleX(0.8903);-webkit-text-stroke:0.25px #333;'>Filters Bar</div>
<div class='t' style='left:802px;top:736.47px;line-height:8.9px;font-family:"Liberation Sans",sans-serif;font-size:8.9px;font-weight:normal;color:#3a3a3a;transform:scaleX(0.9018);-webkit-text-stroke:0.25px #3a3a3a;'>Navigation Bar</div>
<div class="a" style="left:752.8px;top:750.5px;width:207.2px;height:17.5px;background:#eeecea"></div>
<div class='t' style='left:760.6px;top:749.72px;line-height:16.4px;font-family:"Liberation Mono",monospace;font-size:16.4px;font-weight:bold;color:#3a0505;transform:scaleX(1.0039);'>www.todolistsoft.com</div>
<div class="a" style="left:757px;top:188px;width:136px;height:220.5px;background:rgba(0,0,0,.75);filter:blur(2px)"></div>
<div class="a" style="left:754.8px;top:180.3px;width:134.5px;height:225.3px;background:linear-gradient(#fdfdfd,#f2f2f2 40%,#ededed);border:1.6px solid #333"></div>
<div class='t' style='left:761px;top:186.34px;line-height:9.4px;font-family:"Liberation Sans",sans-serif;font-size:9.4px;font-weight:normal;color:#2a2a2a;transform:scaleX(0.9763);-webkit-text-stroke:0.25px #2a2a2a;'>Customization</div>
<div class="a" style="left:873px;top:184.8px;width:12.6px;height:12.2px;border:1px solid #8e4034;border-radius:2px;background:linear-gradient(#e6998a,#c0503f)"></div>
<svg class="a" style="left:876.3px;top:188px" width="6" height="6"><path d="M1 1L5 5M5 1L1 5" stroke="#fff" stroke-width="1.4"/></svg>
<div class="a" style="left:759.8px;top:199px;width:125.8px;height:201.6px;border:1.2px solid #333;background:#f0f0f0"></div>
<div class="a" style="left:761.5px;top:215.8px;width:122px;height:183.2px;border:1px solid #b0b0b0;background:#fafafa"></div>
<div class="a" style="left:763.7px;top:202px;width:41px;height:14.8px;border:1px solid #9a9a9a;border-bottom:none;background:#fbfbfb"></div>
<div class='t' style='left:768px;top:204.41px;line-height:9.2px;font-family:"Liberation Sans",sans-serif;font-size:9.2px;font-weight:normal;color:#222;transform:scaleX(0.8410);-webkit-text-stroke:0.25px #222;'>Columns</div>
<div class="a" style="left:765.8px;top:219.6px;width:101.5px;height:177px;background:#fff;border:1px solid #c9c9c9"></div>
<div class="a" style="left:766.5px;top:220.3px;width:100px;height:12.2px;background:linear-gradient(#d7f0fb,#bfe6f8);border-bottom:1px solid #a9d6ee"></div>
<div class='t' style='left:767.7px;top:222.34px;line-height:9.4px;font-family:"Liberation Sans",sans-serif;font-size:9.4px;font-weight:normal;color:#1e1e1e;transform:scaleX(0.8268);-webkit-text-stroke:0.25px #1e1e1e;'>Actual Time</div>
<div class="a" style="left:766.5px;top:233.05px;width:100px;height:12.75px;background:linear-gradient(#ffffff 10%,#f1f1f1 90%)"></div>
<div class="a" style="left:766.5px;top:244.55px;width:100px;height:0.9px;background:#e4e4e4"></div>
<div class='t' style='left:767.7px;top:235.09px;line-height:9.4px;font-family:"Liberation Sans",sans-serif;font-size:9.4px;font-weight:normal;color:#1e1e1e;transform:scaleX(0.8752);-webkit-text-stroke:0.25px #1e1e1e;'>Category</div>
<div class="a" style="left:766.5px;top:245.8px;width:100px;height:12.75px;background:linear-gradient(#ffffff 10%,#f1f1f1 90%)"></div>
<div class="a" style="left:766.5px;top:257.3px;width:100px;height:0.9px;background:#e4e4e4"></div>
<div class='t' style='left:767.7px;top:247.84px;line-height:9.4px;font-family:"Liberation Sans",sans-serif;font-size:9.4px;font-weight:normal;color:#1e1e1e;transform:scaleX(0.8458);-webkit-text-stroke:0.25px #1e1e1e;'>Date Completed</div>
<div class="a" style="left:766.5px;top:258.55px;width:100px;height:12.75px;background:linear-gradient(#ffffff 10%,#f1f1f1 90%)"></div>
<div class="a" style="left:766.5px;top:270.05px;width:100px;height:0.9px;background:#e4e4e4"></div>
<div class='t' style='left:767.7px;top:260.59px;line-height:9.4px;font-family:"Liberation Sans",sans-serif;font-size:9.4px;font-weight:normal;color:#1e1e1e;transform:scaleX(0.8679);-webkit-text-stroke:0.25px #1e1e1e;'>Date Created</div>
<div class="a" style="left:766.5px;top:271.3px;width:100px;height:12.75px;background:linear-gradient(#ffffff 10%,#f1f1f1 90%)"></div>
<div class="a" style="left:766.5px;top:282.8px;width:100px;height:0.9px;background:#e4e4e4"></div>
<div class='t' style='left:767.7px;top:273.34px;line-height:9.4px;font-family:"Liberation Sans",sans-serif;font-size:9.4px;font-weight:normal;color:#1e1e1e;transform:scaleX(0.8494);-webkit-text-stroke:0.25px #1e1e1e;'>Date Last Modified</div>
<div class="a" style="left:766.5px;top:284.05px;width:100px;height:12.75px;background:linear-gradient(#ffffff 10%,#f1f1f1 90%)"></div>
<div class="a" style="left:766.5px;top:295.55px;width:100px;height:0.9px;background:#e4e4e4"></div>
<div class='t' style='left:767.7px;top:286.09px;line-height:9.4px;font-family:"Liberation Sans",sans-serif;font-size:9.4px;font-weight:normal;color:#1e1e1e;transform:scaleX(0.8497);-webkit-text-stroke:0.25px #1e1e1e;'>Date Opened</div>
<div class="a" style="left:766.5px;top:296.8px;width:100px;height:12.75px;background:linear-gradient(#ffffff 10%,#f1f1f1 90%)"></div>
<div class="a" style="left:766.5px;top:308.3px;width:100px;height:0.9px;background:#e4e4e4"></div>
<div class='t' style='left:767.7px;top:298.84px;line-height:9.4px;font-family:"Liberation Sans",sans-serif;font-size:9.4px;font-weight:normal;color:#1e1e1e;transform:scaleX(0.8685);-webkit-text-stroke:0.25px #1e1e1e;'>Days Left</div>
<div class="a" style="left:766.5px;top:309.55px;width:100px;height:12.75px;background:linear-gradient(#ffffff 10%,#f1f1f1 90%)"></div>
<div class="a" style="left:766.5px;top:321.05px;width:100px;height:0.9px;background:#e4e4e4"></div>
<div class='t' style='left:767.7px;top:311.59px;line-height:9.4px;font-family:"Liberation Sans",sans-serif;font-size:9.4px;font-weight:normal;color:#1e1e1e;transform:scaleX(0.8432);-webkit-text-stroke:0.25px #1e1e1e;'>Due Date</div>
<div class="a" style="left:766.5px;top:322.3px;width:100px;height:12.75px;background:linear-gradient(#ffffff 10%,#f1f1f1 90%)"></div>
<div class="a" style="left:766.5px;top:333.8px;width:100px;height:0.9px;background:#e4e4e4"></div>
<div class='t' style='left:767.7px;top:324.34px;line-height:9.4px;font-family:"Liberation Sans",sans-serif;font-size:9.4px;font-weight:normal;color:#1e1e1e;transform:scaleX(0.8366);-webkit-text-stroke:0.25px #1e1e1e;'>Due Date&amp;Time</div>
<div class="a" style="left:766.5px;top:335.05px;width:100px;height:12.75px;background:linear-gradient(#ffffff 10%,#f1f1f1 90%)"></div>
<div class="a" style="left:766.5px;top:346.55px;width:100px;height:0.9px;background:#e4e4e4"></div>
<div class='t' style='left:767.7px;top:337.09px;line-height:9.4px;font-family:"Liberation Sans",sans-serif;font-size:9.4px;font-weight:normal;color:#1e1e1e;transform:scaleX(0.8296);-webkit-text-stroke:0.25px #1e1e1e;'>Estimated Time</div>
<div class="a" style="left:766.5px;top:347.8px;width:100px;height:12.75px;background:linear-gradient(#ffffff 10%,#f1f1f1 90%)"></div>
<div class="a" style="left:766.5px;top:359.3px;width:100px;height:0.9px;background:#e4e4e4"></div>
<div class='t' style='left:767.7px;top:349.84px;line-height:9.4px;font-family:"Liberation Sans",sans-serif;font-size:9.4px;font-weight:normal;color:#1e1e1e;transform:scaleX(0.8393);-webkit-text-stroke:0.25px #1e1e1e;'>Hyperlink</div>
<div class="a" style="left:766.5px;top:360.55px;width:100px;height:12.75px;background:linear-gradient(#ffffff 10%,#f1f1f1 90%)"></div>
<div class="a" style="left:766.5px;top:372.05px;width:100px;height:0.9px;background:#e4e4e4"></div>
<div class='t' style='left:767.7px;top:362.59px;line-height:9.4px;font-family:"Liberation Sans",sans-serif;font-size:9.4px;font-weight:normal;color:#1e1e1e;transform:scaleX(0.9399);-webkit-text-stroke:0.25px #1e1e1e;'>Info</div>
<div class="a" style="left:766.5px;top:373.3px;width:100px;height:12.75px;background:linear-gradient(#ffffff 10%,#f1f1f1 90%)"></div>
<div class="a" style="left:766.5px;top:384.8px;width:100px;height:0.9px;background:#e4e4e4"></div>
<div class='t' style='left:767.7px;top:375.34px;line-height:9.4px;font-family:"Liberation Sans",sans-serif;font-size:9.4px;font-weight:normal;color:#1e1e1e;transform:scaleX(0.8212);-webkit-text-stroke:0.25px #1e1e1e;'>Reminder Time</div>
<div class="a" style="left:766.5px;top:386.05px;width:100px;height:12.75px;background:linear-gradient(#ffffff 10%,#f1f1f1 90%)"></div>
<div class="a" style="left:766.5px;top:397.55px;width:100px;height:0.9px;background:#e4e4e4"></div>
<div class='t' style='left:767.7px;top:388.09px;line-height:9.4px;font-family:"Liberation Sans",sans-serif;font-size:9.4px;font-weight:normal;color:#1e1e1e;transform:scaleX(0.8468);-webkit-text-stroke:0.25px #1e1e1e;'>Time Left</div>
<div class="a" style="left:766px;top:393.6px;width:101px;height:2px;background:#fff"></div>
<div class="a" style="left:766px;top:396.3px;width:101px;height:3px;background:#fafafa"></div>
<div class="a" style="left:765.8px;top:395.6px;width:101.5px;height:0.9px;background:#c9c9c9"></div>
<div class="a" style="left:867px;top:220px;width:12.5px;height:176.3px;background:#f3f3f3;border-left:1px solid #e0e0e0"></div>
<svg class="a" style="left:870.5px;top:225px" width="6" height="4"><path d="M0 3.5L3 0 6 3.5z" fill="#444"/></svg>
<svg class="a" style="left:870.5px;top:386.5px" width="6" height="4"><path d="M0 0L3 3.5 6 0z" fill="#444"/></svg>
<div class="a" style="left:868.5px;top:234px;width:10px;height:136px;border:1px solid #b8b8b8;border-radius:2px;background:linear-gradient(90deg,#f4f4f4,#dcdcdc)"></div>
<div class="a" style="left:871.3px;top:298.5px;width:4.5px;height:0.8px;background:#777"></div>
<div class="a" style="left:871.3px;top:300.5px;width:4.5px;height:0.8px;background:#777"></div>
<div class="a" style="left:871.3px;top:302.5px;width:4.5px;height:0.8px;background:#777"></div>
</body></html>
